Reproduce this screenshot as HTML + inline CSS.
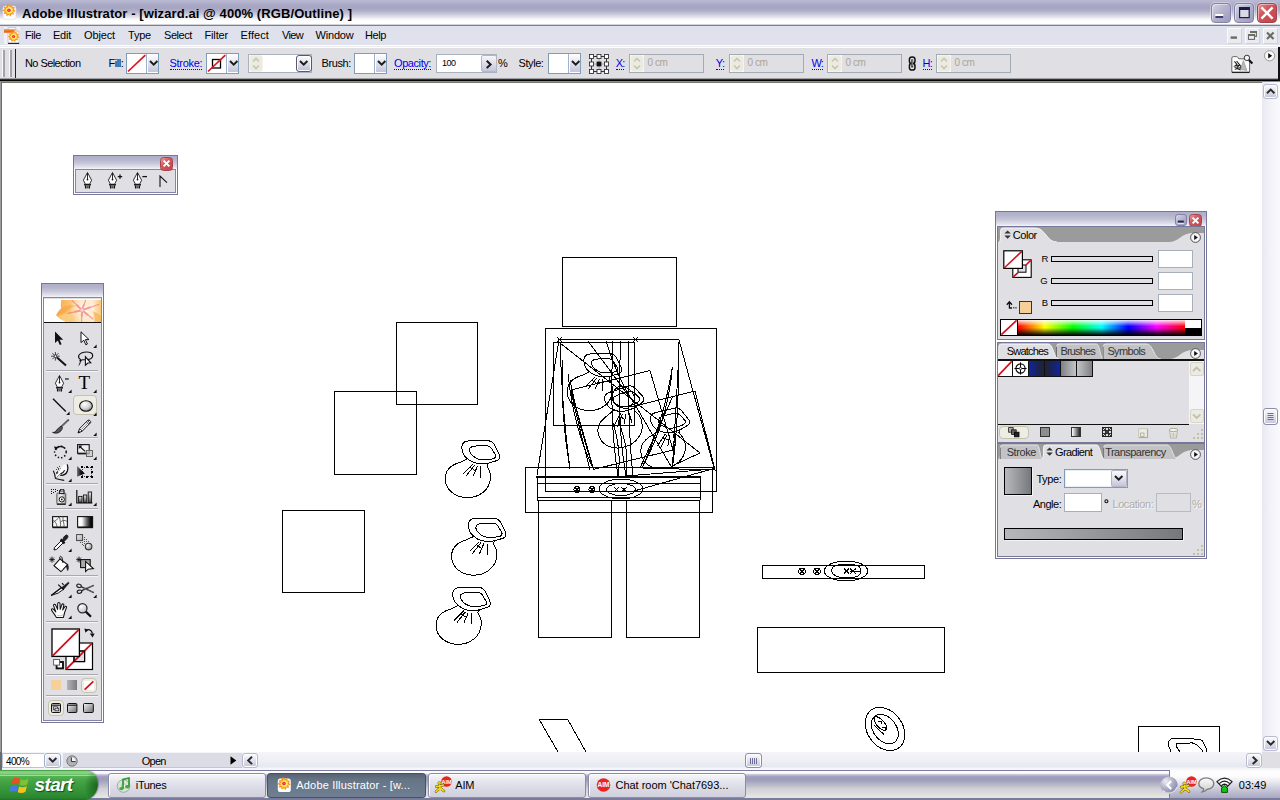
<!DOCTYPE html>
<html lang="en"><head><meta charset="utf-8"><title>Adobe Illustrator - [wizard.ai @ 400% (RGB/Outline) ]</title>
<style>
html,body{margin:0;padding:0;}
body{width:1280px;height:800px;overflow:hidden;position:relative;background:#fff;
 font-family:"Liberation Sans",sans-serif;font-size:11px;color:#000;}
.t{position:absolute;white-space:nowrap;line-height:14px;}
svg{overflow:visible;display:block;}
.abs{position:absolute;}
.du{border-bottom:1px dotted #0000ee;padding-bottom:0;line-height:12px;}
</style></head>
<body>
<div style="position:absolute;left:0px;top:0px;width:1280px;height:26px;background:linear-gradient(to bottom,#babad3 0,#b4b4cf 2px,#a9a9c6 5px,#a5a5c3 8px,#b0b0ca 11px,#c8c8da 14px,#e2e2ec 17px,#f6f6f9 19px,#ffffff 21px,#ffffff 23.6px,#d6d6dc 24.2px,#cfcfd8 24.9px,#7e7e9e 25px,#7e7e9e 26px);"></div>
<svg style="position:absolute;left:2px;top:4px;" width="16" height="16" viewBox="0 0 16 16"><rect x="1" y="2" width="13" height="13.4" rx="2.6" fill="#fbfbfd" stroke="#dcdce6" stroke-width="0.6"/><g transform="translate(0.2,0) scale(0.86)"><path d="M7.4 0.2 9.2 2.2 11.6 0.8 12 3.6 14.8 3.8 13.6 6.4 15.6 8.4 13 9.4 13.6 12.2 10.8 11.8 9.8 14.4 7.6 12.6 5.2 14.2 4.6 11.4 1.8 11.6 2.8 9 0.4 7.4 2.8 6 1.8 3.2 4.6 3.4 5.4 0.8z" fill="#f8931d"/>
<path d="M7.6 2 9 3.6 10.8 2.8 11 4.8 13 5.2 12 7 13.4 8.6 11.6 9.2 11.8 11 9.8 10.6 9 12.4 7.6 11 5.8 12 5.6 10 3.6 10 4.4 8.2 2.8 7 4.6 6.2 4 4.2 6 4.6z" fill="#fde24a"/>
<path d="M7.8 3.8 8.8 5 10 4.6 10 6 11.4 6.6 10.4 7.6 11 9 9.6 9 9 10.2 8 9.4 6.8 10 6.8 8.6 5.6 8.2 6.4 7.2 5.6 6 7 6z" fill="#fff7c8"/>
<circle cx="7.9" cy="7.2" r="2.1" fill="#f4262c"/><circle cx="7.9" cy="7.2" r="0.9" fill="#fa6a5a"/></g></svg>
<span class="t" style="left:22px;top:6px;font-size:13px;font-weight:bold;letter-spacing:0.087px;line-height:16px;">Adobe Illustrator - [wizard.ai @ 400% (RGB/Outline) ]</span>
<div style="position:absolute;left:1211px;top:3px;width:20px;height:20px;background:linear-gradient(135deg,#d4d4e4 0,#b4b4ce 45%,#9c9cbc 100%);border:1px solid #8282a8;border-radius:4px;box-sizing:border-box;box-shadow:inset 1px 1px 0 rgba(255,255,255,.45),0 0 0 1px rgba(255,255,255,.35);"></div>
<div style="position:absolute;left:1234px;top:3px;width:20px;height:20px;background:linear-gradient(135deg,#d4d4e4 0,#b4b4ce 45%,#9c9cbc 100%);border:1px solid #8282a8;border-radius:4px;box-sizing:border-box;box-shadow:inset 1px 1px 0 rgba(255,255,255,.45),0 0 0 1px rgba(255,255,255,.35);"></div>
<div style="position:absolute;left:1257px;top:3px;width:20px;height:20px;background:linear-gradient(135deg,#e4908f 0,#d2555b 40%,#c0434b 100%);border:1px solid #a6414b;border-radius:4px;box-sizing:border-box;box-shadow:inset 1px 1px 0 rgba(255,255,255,.45),0 0 0 1px rgba(255,255,255,.35);"></div>
<svg style="position:absolute;left:1211px;top:3px;" width="20" height="20" viewBox="0 0 20 20"><rect x="4.4" y="11.2" width="7.8" height="3.6" fill="#fff"/><rect x="4.4" y="13" width="7.8" height="2" fill="#3c3c66"/><rect x="4.4" y="11" width="7.8" height="1" fill="#fff"/></svg>
<svg style="position:absolute;left:1234px;top:3px;" width="20" height="20" viewBox="0 0 20 20"><rect x="5.6" y="4.6" width="9.6" height="10" fill="#d9d9e6" stroke="#1c1c48" stroke-width="1.2"/><rect x="5" y="4" width="10.8" height="3" fill="#1c1c48"/></svg>
<svg style="position:absolute;left:1257px;top:3px;" width="20" height="20" viewBox="0 0 20 20"><path d="M4.4 4.4 15.6 15.6M15.6 4.4 4.4 15.6" stroke="#fff" stroke-width="2.4" stroke-linecap="butt"/></svg>
<div style="position:absolute;left:0px;top:26px;width:1280px;height:19px;background:#dfe1ec;"></div>
<div style="position:absolute;left:0px;top:45px;width:1280px;height:3px;background:linear-gradient(to bottom,#fefefe 0,#fefefe 1px,#ececee 1px,#ececee 2px,#fdfdfd 2px);"></div>
<svg style="position:absolute;left:4px;top:27px;" width="17" height="17" viewBox="0 0 17 17"><rect x="0" y="0" width="16" height="17" fill="#f1f2f7"/><path d="M4 0.6H11.4L15 4.2V16.2H4z" fill="#fdfdf9" stroke="#b4b4b4" stroke-width="0.7"/><path d="M11.4 0.6V4.2H15" fill="#e8e8e8" stroke="#b4b4b4" stroke-width="0.6"/><path d="M4 16.4H15.2" stroke="#222" stroke-width="1.1"/><path d="M0 2.4H10.6V5.8H0z" fill="#ee6a12"/><path d="M0 2.4H10.6V3.4H0z" fill="#f89a4a"/><g transform="translate(3.6,4) scale(0.76)"><path d="M7.4 0.2 9.2 2.2 11.6 0.8 12 3.6 14.8 3.8 13.6 6.4 15.6 8.4 13 9.4 13.6 12.2 10.8 11.8 9.8 14.4 7.6 12.6 5.2 14.2 4.6 11.4 1.8 11.6 2.8 9 0.4 7.4 2.8 6 1.8 3.2 4.6 3.4 5.4 0.8z" fill="#f8931d"/>
<path d="M7.6 2 9 3.6 10.8 2.8 11 4.8 13 5.2 12 7 13.4 8.6 11.6 9.2 11.8 11 9.8 10.6 9 12.4 7.6 11 5.8 12 5.6 10 3.6 10 4.4 8.2 2.8 7 4.6 6.2 4 4.2 6 4.6z" fill="#fde24a"/>
<path d="M7.8 3.8 8.8 5 10 4.6 10 6 11.4 6.6 10.4 7.6 11 9 9.6 9 9 10.2 8 9.4 6.8 10 6.8 8.6 5.6 8.2 6.4 7.2 5.6 6 7 6z" fill="#fff7c8"/>
<circle cx="7.9" cy="7.2" r="2.1" fill="#f4262c"/><circle cx="7.9" cy="7.2" r="0.9" fill="#fa6a5a"/></g></svg>
<span class="t" style="left:25px;top:28px;font-size:11px;letter-spacing:-0.430px;">File</span>
<span class="t" style="left:53px;top:28px;font-size:11px;letter-spacing:-0.242px;">Edit</span>
<span class="t" style="left:84px;top:28px;font-size:11px;letter-spacing:-0.135px;">Object</span>
<span class="t" style="left:128px;top:28px;font-size:11px;letter-spacing:-0.215px;">Type</span>
<span class="t" style="left:164px;top:28px;font-size:11px;letter-spacing:-0.432px;">Select</span>
<span class="t" style="left:204.5px;top:28px;font-size:11px;letter-spacing:-0.156px;">Filter</span>
<span class="t" style="left:240.5px;top:28px;font-size:11px;letter-spacing:0.091px;">Effect</span>
<span class="t" style="left:282px;top:28px;font-size:11px;letter-spacing:-0.660px;">View</span>
<span class="t" style="left:315.5px;top:28px;font-size:11px;letter-spacing:-0.188px;">Window</span>
<span class="t" style="left:365px;top:28px;font-size:11px;letter-spacing:-0.406px;">Help</span>
<div style="position:absolute;left:1227px;top:28px;width:15px;height:16px;background:#e9ebf1;border:1px solid #fbfbfd;border-right-color:#cfd1dc;border-bottom-color:#cfd1dc;box-sizing:border-box;"></div>
<div style="position:absolute;left:1245px;top:28px;width:15px;height:16px;background:#e9ebf1;border:1px solid #fbfbfd;border-right-color:#cfd1dc;border-bottom-color:#cfd1dc;box-sizing:border-box;"></div>
<div style="position:absolute;left:1263px;top:28px;width:15px;height:16px;background:#e9ebf1;border:1px solid #fbfbfd;border-right-color:#cfd1dc;border-bottom-color:#cfd1dc;box-sizing:border-box;"></div>
<svg style="position:absolute;left:1227px;top:28px;" width="15" height="16" viewBox="0 0 15 16"><rect x="3.6" y="8.4" width="6.4" height="2.4" fill="#6c6c62"/></svg>
<svg style="position:absolute;left:1245px;top:28px;" width="15" height="16" viewBox="0 0 15 16"><path d="M5.6 3.6H11.4V8.4H9.6" fill="none" stroke="#6c6c62" stroke-width="1.1"/><path d="M5 3H12V5H5z" fill="#6c6c62"/><rect x="3.5" y="6.6" width="6" height="4.8" fill="#e9ebf1" stroke="#6c6c62" stroke-width="1.1"/><path d="M3 6H10V8H3z" fill="#6c6c62"/></svg>
<svg style="position:absolute;left:1263px;top:28px;" width="15" height="16" viewBox="0 0 15 16"><path d="M4 4.4 10.6 11M10.6 4.4 4 11" stroke="#6c6c62" stroke-width="2.1"/></svg>
<div style="position:absolute;left:0px;top:48px;width:1280px;height:32px;background:#e0dfe3;"></div>
<div style="position:absolute;left:0px;top:78px;width:1279px;height:3px;background:linear-gradient(to bottom,#d2d1d5 0,#6e6e70 1px,#5a5a5a 1.4px,#0a0a0a 1.6px,#000 3px);"></div>
<div style="position:absolute;left:1278px;top:47px;width:2px;height:34px;background:#111;"></div>
<div style="position:absolute;left:0px;top:81px;width:1280px;height:1px;background:#8e8e88;"></div>
<div style="position:absolute;left:0px;top:82px;width:1262px;height:1px;background:#77776c;"></div>
<div style="position:absolute;left:2px;top:50px;width:1px;height:27px;background:#fafafa;"></div>
<div style="position:absolute;left:3px;top:50px;width:2px;height:27px;background:#a2a2a8;"></div>
<div style="position:absolute;left:9px;top:50px;width:1px;height:27px;background:#fafafa;"></div>
<div style="position:absolute;left:10px;top:50px;width:2px;height:27px;background:#a2a2a8;"></div>
<div style="position:absolute;left:15px;top:49px;width:1px;height:29px;background:#222;"></div>
<span class="t" style="left:25px;top:56px;font-size:11px;letter-spacing:-0.576px;">No Selection</span>
<span class="t" style="left:108.5px;top:56px;font-size:11px;letter-spacing:-0.459px;">Fill:</span>
<div style="position:absolute;left:126px;top:53px;width:33px;height:21px;box-sizing:border-box;border:1px solid #7f9db9;background:#fff;"></div><div style="position:absolute;left:146px;top:54px;width:1px;height:19px;background:#9db2cc;"></div><div style="position:absolute;left:148px;top:55px;width:10px;height:17px;background:linear-gradient(to bottom,#fdfdfe 0,#e6e6f0 40%,#c4c4dc 100%);"></div><svg style="position:absolute;left:149.5px;top:61px;" width="8" height="5" viewBox="0 0 8 5"><path d="M0 0 3.7 3.6 7.4 0" fill="none" stroke="#1c1c1c" stroke-width="2" stroke-linejoin="miter"/></svg><svg style="position:absolute;left:126px;top:53px;" width="21" height="21" viewBox="0 0 21 21"><path d="M2 18.5 19.3 2.2" stroke="#d8141e" stroke-width="1.7"/></svg>
<span class="t du" style="left:169.6px;top:57px;font-size:11px;color:#0000ee;letter-spacing:-0.311px;">Stroke:</span>
<div style="position:absolute;left:206px;top:53px;width:33px;height:21px;box-sizing:border-box;border:1px solid #7f9db9;background:#fff;"></div><div style="position:absolute;left:226px;top:54px;width:1px;height:19px;background:#9db2cc;"></div><div style="position:absolute;left:228px;top:55px;width:10px;height:17px;background:linear-gradient(to bottom,#fdfdfe 0,#e6e6f0 40%,#c4c4dc 100%);"></div><svg style="position:absolute;left:229.5px;top:61px;" width="8" height="5" viewBox="0 0 8 5"><path d="M0 0 3.7 3.6 7.4 0" fill="none" stroke="#1c1c1c" stroke-width="2" stroke-linejoin="miter"/></svg><svg style="position:absolute;left:206px;top:53px;" width="21" height="21" viewBox="0 0 21 21"><rect x="6.5" y="6.5" width="8" height="8.5" fill="none" stroke="#000" stroke-width="1.3"/><path d="M2 18.5 19.3 2.2" stroke="#d8141e" stroke-width="1.7"/></svg>
<div style="position:absolute;left:248px;top:54px;width:64px;height:19px;box-sizing:border-box;border:1px solid #a9b1be;background:#fff;"></div>
<div style="position:absolute;left:250px;top:56px;width:12px;height:15px;background:#ecebe0;border-radius:2px;box-shadow:0 0 0 1px #f4f3ea;"></div><svg style="position:absolute;left:250px;top:56px;" width="12" height="15" viewBox="0 0 12 15"><path d="M3.0 5.5 6.0 2.5 9.0 5.5M3.0 9.5 6.0 12.5 9.0 9.5" fill="none" stroke="#c6c5b6" stroke-width="1.6"/></svg>
<div style="position:absolute;left:296px;top:55px;width:16px;height:17px;box-sizing:border-box;border:1px solid #55586e;border-radius:3px;background:linear-gradient(to bottom,#fdfdfe 0,#e6e6f0 40%,#bdbdd6 100%);box-shadow:inset 0 0 0 1px #fff;"></div>
<svg style="position:absolute;left:300.3px;top:61px;" width="8" height="5" viewBox="0 0 8 5"><path d="M0 0 3.7 3.6 7.4 0" fill="none" stroke="#1c1c1c" stroke-width="2" stroke-linejoin="miter"/></svg>
<span class="t" style="left:321.5px;top:56px;font-size:11px;letter-spacing:-0.385px;">Brush:</span>
<div style="position:absolute;left:354px;top:53px;width:33px;height:21px;box-sizing:border-box;border:1px solid #7f9db9;background:#fff;"></div><div style="position:absolute;left:374px;top:54px;width:1px;height:19px;background:#9db2cc;"></div><div style="position:absolute;left:376px;top:55px;width:10px;height:17px;background:linear-gradient(to bottom,#fdfdfe 0,#e6e6f0 40%,#c4c4dc 100%);"></div><svg style="position:absolute;left:377.5px;top:61px;" width="8" height="5" viewBox="0 0 8 5"><path d="M0 0 3.7 3.6 7.4 0" fill="none" stroke="#1c1c1c" stroke-width="2" stroke-linejoin="miter"/></svg>
<span class="t du" style="left:394px;top:57px;font-size:11px;color:#0000ee;letter-spacing:-0.422px;">Opacity:</span>
<div style="position:absolute;left:436px;top:54px;width:61px;height:19px;box-sizing:border-box;border:1px solid #a9b1be;background:#fff;"></div>
<span class="t" style="left:442px;top:56.5px;font-size:9px;letter-spacing:-0.500px;line-height:13px;">100</span>
<div style="position:absolute;left:481px;top:55px;width:16px;height:17px;box-sizing:border-box;border:1px solid #b4b6c8;border-radius:2px;background:linear-gradient(to bottom,#f6f6fa 0,#dedeea 50%,#c6c6dc 100%);"></div>
<svg style="position:absolute;left:485.5px;top:59.5px;" width="6" height="9" viewBox="0 0 6 9"><path d="M0.7 0.7 4.6 4.4 0.7 8.1" fill="none" stroke="#1c1c1c" stroke-width="2"/></svg>
<span class="t" style="left:498px;top:56px;font-size:11px;letter-spacing:-0.781px;">%</span>
<span class="t" style="left:518.5px;top:56px;font-size:11px;letter-spacing:-0.422px;">Style:</span>
<div style="position:absolute;left:548px;top:53px;width:33px;height:21px;box-sizing:border-box;border:1px solid #7f9db9;background:#fff;"></div><div style="position:absolute;left:568px;top:54px;width:1px;height:19px;background:#9db2cc;"></div><div style="position:absolute;left:570px;top:55px;width:10px;height:17px;background:linear-gradient(to bottom,#fdfdfe 0,#e6e6f0 40%,#c4c4dc 100%);"></div><svg style="position:absolute;left:571.5px;top:61px;" width="8" height="5" viewBox="0 0 8 5"><path d="M0 0 3.7 3.6 7.4 0" fill="none" stroke="#1c1c1c" stroke-width="2" stroke-linejoin="miter"/></svg>
<svg style="position:absolute;left:589px;top:53.5px;" width="20" height="20" viewBox="0 0 20 20"><rect x="2.5" y="2.5" width="15" height="15" fill="none" stroke="#333" stroke-width="1"/><path d="M2.5 10H17.5M10 2.5V17.5" stroke="#555" stroke-width="0.8" stroke-dasharray="1 1"/><rect x="0.5" y="0.5" width="4" height="4" fill="#fff" stroke="#333" stroke-width="0.9"/><rect x="8.0" y="0.5" width="4" height="4" fill="#fff" stroke="#333" stroke-width="0.9"/><rect x="15.5" y="0.5" width="4" height="4" fill="#fff" stroke="#333" stroke-width="0.9"/><rect x="0.5" y="8.0" width="4" height="4" fill="#fff" stroke="#333" stroke-width="0.9"/><rect x="7.6" y="7.6" width="4.8" height="4.8" fill="#111"/><rect x="15.5" y="8.0" width="4" height="4" fill="#fff" stroke="#333" stroke-width="0.9"/><rect x="0.5" y="15.5" width="4" height="4" fill="#fff" stroke="#333" stroke-width="0.9"/><rect x="8.0" y="15.5" width="4" height="4" fill="#fff" stroke="#333" stroke-width="0.9"/><rect x="15.5" y="15.5" width="4" height="4" fill="#fff" stroke="#333" stroke-width="0.9"/></svg>
<span class="t du" style="left:615.8px;top:57px;font-size:11px;color:#0000ee;letter-spacing:-0.953px;">X:</span><div style="position:absolute;left:629px;top:54px;width:75px;height:19px;box-sizing:border-box;border:1px solid #a4abb4;background:#e0dfe3;"></div><div style="position:absolute;left:630px;top:55px;width:14px;height:17px;background:#fff;"></div><div style="position:absolute;left:631px;top:56px;width:12px;height:15px;background:#ecebe0;border-radius:2px;box-shadow:0 0 0 1px #f4f3ea;"></div><svg style="position:absolute;left:631px;top:56px;" width="12" height="15" viewBox="0 0 12 15"><path d="M3.0 5.5 6.0 2.5 9.0 5.5M3.0 9.5 6.0 12.5 9.0 9.5" fill="none" stroke="#c6c5b6" stroke-width="1.6"/></svg><span class="t" style="left:647.5px;top:56px;font-size:10px;color:#a8a696;letter-spacing:-0.468px;">0 cm</span>
<span class="t du" style="left:715.8px;top:57px;font-size:11px;color:#0000ee;letter-spacing:-0.648px;">Y:</span><div style="position:absolute;left:729px;top:54px;width:75px;height:19px;box-sizing:border-box;border:1px solid #a4abb4;background:#e0dfe3;"></div><div style="position:absolute;left:730px;top:55px;width:14px;height:17px;background:#fff;"></div><div style="position:absolute;left:731px;top:56px;width:12px;height:15px;background:#ecebe0;border-radius:2px;box-shadow:0 0 0 1px #f4f3ea;"></div><svg style="position:absolute;left:731px;top:56px;" width="12" height="15" viewBox="0 0 12 15"><path d="M3.0 5.5 6.0 2.5 9.0 5.5M3.0 9.5 6.0 12.5 9.0 9.5" fill="none" stroke="#c6c5b6" stroke-width="1.6"/></svg><span class="t" style="left:747.5px;top:56px;font-size:10px;color:#a8a696;letter-spacing:-0.468px;">0 cm</span>
<span class="t du" style="left:811.5px;top:57px;font-size:11px;color:#0000ee;letter-spacing:-0.867px;">W:</span><div style="position:absolute;left:827px;top:54px;width:75px;height:19px;box-sizing:border-box;border:1px solid #a4abb4;background:#e0dfe3;"></div><div style="position:absolute;left:828px;top:55px;width:14px;height:17px;background:#fff;"></div><div style="position:absolute;left:829px;top:56px;width:12px;height:15px;background:#ecebe0;border-radius:2px;box-shadow:0 0 0 1px #f4f3ea;"></div><svg style="position:absolute;left:829px;top:56px;" width="12" height="15" viewBox="0 0 12 15"><path d="M3.0 5.5 6.0 2.5 9.0 5.5M3.0 9.5 6.0 12.5 9.0 9.5" fill="none" stroke="#c6c5b6" stroke-width="1.6"/></svg><span class="t" style="left:845.5px;top:56px;font-size:10px;color:#a8a696;letter-spacing:-0.468px;">0 cm</span>
<span class="t du" style="left:922.5px;top:57px;font-size:11px;color:#0000ee;letter-spacing:-0.750px;">H:</span><div style="position:absolute;left:936px;top:54px;width:75px;height:19px;box-sizing:border-box;border:1px solid #a4abb4;background:#e0dfe3;"></div><div style="position:absolute;left:937px;top:55px;width:14px;height:17px;background:#fff;"></div><div style="position:absolute;left:938px;top:56px;width:12px;height:15px;background:#ecebe0;border-radius:2px;box-shadow:0 0 0 1px #f4f3ea;"></div><svg style="position:absolute;left:938px;top:56px;" width="12" height="15" viewBox="0 0 12 15"><path d="M3.0 5.5 6.0 2.5 9.0 5.5M3.0 9.5 6.0 12.5 9.0 9.5" fill="none" stroke="#c6c5b6" stroke-width="1.6"/></svg><span class="t" style="left:954.5px;top:56px;font-size:10px;color:#a8a696;letter-spacing:-0.468px;">0 cm</span>
<svg style="position:absolute;left:908px;top:56px;" width="9" height="15" viewBox="0 0 9 15"><rect x="1.4" y="0.9" width="5.6" height="6.8" rx="2.6" fill="#e8e8e8" stroke="#111" stroke-width="1.5"/><rect x="1.4" y="7.3" width="5.6" height="6.8" rx="2.6" fill="#e8e8e8" stroke="#111" stroke-width="1.5"/><path d="M4.2 3.4V11.4" stroke="#111" stroke-width="2"/><path d="M4.2 4V10.4" stroke="#eee" stroke-width="0.7"/></svg>
<svg style="position:absolute;left:1231px;top:54px;" width="23" height="20" viewBox="0 0 23 20">
<path d="M0.8 4.4Q0.8 2.6 2.4 2.6H5.4Q6.6 2.6 7.2 3.8L7.8 4.8H17.4Q18.6 4.8 18.6 6V17.2Q18.6 18.4 17.4 18.4H2Q0.8 18.4 0.8 17.2z" fill="#fdfdfd" stroke="#555" stroke-width="0.9"/>
<path d="M0.8 18.4H18.6" stroke="#222" stroke-width="1.3"/>
<path d="M3.4 7.4 6 10.4 4 12 8 11.4 5 15 10 13.4 9 16M5.6 7l5 6.4M3.6 13.6l6 2.4" stroke="#222" stroke-width="1.1" fill="none"/>
<path d="M12.4 6.4 9.4 15.6 15.8 16.4z" fill="#bbb" stroke="#888" stroke-width="0.6"/>
<circle cx="15.9" cy="3.9" r="2.7" fill="#f4f4f4" stroke="#333" stroke-width="1"/>
<path d="M17.9 5.9 21.4 9.4" stroke="#111" stroke-width="2.1"/></svg>
<svg style="position:absolute;left:1264px;top:49.5px;" width="12" height="12" viewBox="0 0 12 12"><circle cx="5.6" cy="5.8" r="5.1" fill="#fafafa" stroke="#8c8c8c" stroke-width="0.9"/><path d="M4.2 3 8.2 5.8 4.2 8.6z" fill="#111"/></svg>
<svg style="position:absolute;left:0;top:0;overflow:hidden" width="1262" height="752" viewBox="0 0 1262 752" fill="none" stroke="#000" stroke-width="1" shape-rendering="crispEdges"><rect x="396.5" y="322.5" width="81" height="82"/>
<rect x="334.5" y="391.5" width="82" height="83"/>
<rect x="282.5" y="510.5" width="82" height="82"/>
<rect x="562.5" y="257.5" width="114" height="69"/>
<rect x="545.5" y="328.5" width="171" height="163"/>
<rect x="553.5" y="342.5" width="81" height="83"/>
<rect x="525.5" y="467.5" width="187" height="45"/>
<rect x="538.5" y="500.5" width="73" height="137"/>
<rect x="626.5" y="500.5" width="73" height="137"/>
<path d="M536 476.5H701M536 477.5H701M537 483.5H700M537 497.5H700M537 500.5H700M537.5 476V500M700.5 476V500"/>
<ellipse cx="621" cy="489" rx="22" ry="9.8"/>
<ellipse cx="621" cy="489.5" rx="14.5" ry="6"/>
<ellipse cx="577" cy="489.5" rx="3" ry="3"/>
<ellipse cx="592" cy="489.5" rx="3" ry="3"/>
<path d="M575 487.5l4 4m0-4l-4 4M590 487.5l4 4m0-4l-4 4M614 487l5 5m0-5l-5 5M621 487l6 5m0-5l-6 5"/>
<path d="M558 339.5H679M559 340L537 475M679 340L714 468M557 337l5 5m0-5l-5 5M633 337l5 5m0-5l-5 5"/>
<path d="M714 468.5L634 491M714 469L600 478"/>
<path d="M571 390L650 370.6L673 450L593.6 469.4Z"/>
<path d="M631 407L695 391L715 470L606 467"/>
<path d="M560 343Q562 410 570 469Q560 410 563 360"/>
<path d="M568 374Q574 430 594 470Q580 430 570 380"/>
<path d="M672.4 367Q664 420 642 468Q668 420 672.4 367"/>
<path d="M678 341Q680 410 672.4 468Q676 410 679 352"/>
<path d="M560 343L700 453M588 341L634 403M590 470Q580 430 571 392M613 341Q609 420 618 476M621 341Q616 420 626 476M629 341Q627 420 633 476M634 403L672 468M640 468L673 396M700 453L672 466"/>
<path d="M612 420Q622 450 618 476M618 420Q630 450 626 476M606 341Q618 380 634 403"/>
<g transform="translate(589.5,392) rotate(0) scale(1.0)"><path d="M0 -20.2L-7.2 -16.8C-17 -14 -22.6 -8 -22.2 0.5C-21.8 11 -12 18.6 0 18.6C12 18.6 22.6 10.5 23 -1.5C23.2 -6 21.6 -10 19.3 -13"/><path d="M0 -20.2C-2.4 -22 -4 -24 -4.6 -26.6C-5.6 -29 -6.2 -31 -5.4 -33.6C-4.6 -36.4 -2 -38.1 1.4 -38.1L21.5 -38.1C24 -38 25.6 -36.4 26.7 -34.6L31.6 -24.5C32.6 -22 32.2 -20 30.2 -18.8C27 -17.4 24 -17 21.5 -15.9C20.4 -15 19.8 -14 19.3 -13"/><path d="M2 -28.9C2 -30.6 2.8 -31.6 4.3 -32.3C8 -33.4 15 -33.4 20.1 -33.2C22 -33 23.4 -31.8 24.4 -30.3L28.2 -23.7C28.6 -22 27.6 -20.8 25.9 -20.2C22 -19.2 18 -19 14.4 -19.1C11.6 -19.4 9 -20.4 7.2 -21.7C4.6 -23.6 2.4 -26 2 -28.9Z"/><path d="M0 -20.2C3 -17.6 6 -16.2 9 -15.7C13 -15 17 -15 21.5 -15.9"/><path d="M5.7 -15L-4.3 -5.3M7.2 -13.9L-1.5 -3M10 -13L5.7 -3M13.4 -13L13.4 -1.5M2.9 -11.6L7.2 -8.7"/></g>
<g transform="translate(620,429) rotate(-18) scale(1.0)"><path d="M0 -20.2L-7.2 -16.8C-17 -14 -22.6 -8 -22.2 0.5C-21.8 11 -12 18.6 0 18.6C12 18.6 22.6 10.5 23 -1.5C23.2 -6 21.6 -10 19.3 -13"/><path d="M0 -20.2C-2.4 -22 -4 -24 -4.6 -26.6C-5.6 -29 -6.2 -31 -5.4 -33.6C-4.6 -36.4 -2 -38.1 1.4 -38.1L21.5 -38.1C24 -38 25.6 -36.4 26.7 -34.6L31.6 -24.5C32.6 -22 32.2 -20 30.2 -18.8C27 -17.4 24 -17 21.5 -15.9C20.4 -15 19.8 -14 19.3 -13"/><path d="M2 -28.9C2 -30.6 2.8 -31.6 4.3 -32.3C8 -33.4 15 -33.4 20.1 -33.2C22 -33 23.4 -31.8 24.4 -30.3L28.2 -23.7C28.6 -22 27.6 -20.8 25.9 -20.2C22 -19.2 18 -19 14.4 -19.1C11.6 -19.4 9 -20.4 7.2 -21.7C4.6 -23.6 2.4 -26 2 -28.9Z"/><path d="M0 -20.2C3 -17.6 6 -16.2 9 -15.7C13 -15 17 -15 21.5 -15.9"/><path d="M5.7 -15L-4.3 -5.3M7.2 -13.9L-1.5 -3M10 -13L5.7 -3M13.4 -13L13.4 -1.5M2.9 -11.6L7.2 -8.7"/></g>
<g transform="translate(663,450) rotate(-13) scale(1.0)"><path d="M0 -20.2L-7.2 -16.8C-17 -14 -22.6 -8 -22.2 0.5C-21.8 11 -12 18.6 0 18.6C12 18.6 22.6 10.5 23 -1.5C23.2 -6 21.6 -10 19.3 -13"/><path d="M0 -20.2C-2.4 -22 -4 -24 -4.6 -26.6C-5.6 -29 -6.2 -31 -5.4 -33.6C-4.6 -36.4 -2 -38.1 1.4 -38.1L21.5 -38.1C24 -38 25.6 -36.4 26.7 -34.6L31.6 -24.5C32.6 -22 32.2 -20 30.2 -18.8C27 -17.4 24 -17 21.5 -15.9C20.4 -15 19.8 -14 19.3 -13"/><path d="M2 -28.9C2 -30.6 2.8 -31.6 4.3 -32.3C8 -33.4 15 -33.4 20.1 -33.2C22 -33 23.4 -31.8 24.4 -30.3L28.2 -23.7C28.6 -22 27.6 -20.8 25.9 -20.2C22 -19.2 18 -19 14.4 -19.1C11.6 -19.4 9 -20.4 7.2 -21.7C4.6 -23.6 2.4 -26 2 -28.9Z"/><path d="M0 -20.2C3 -17.6 6 -16.2 9 -15.7C13 -15 17 -15 21.5 -15.9"/><path d="M5.7 -15L-4.3 -5.3M7.2 -13.9L-1.5 -3M10 -13L5.7 -3M13.4 -13L13.4 -1.5M2.9 -11.6L7.2 -8.7"/></g>
<path d="M612 395Q618 380 630 390Q640 400 628 408Q614 410 612 395"/>
<g transform="translate(467.5,479) rotate(0) scale(1.0)"><path d="M0 -20.2L-7.2 -16.8C-17 -14 -22.6 -8 -22.2 0.5C-21.8 11 -12 18.6 0 18.6C12 18.6 22.6 10.5 23 -1.5C23.2 -6 21.6 -10 19.3 -13"/><path d="M0 -20.2C-2.4 -22 -4 -24 -4.6 -26.6C-5.6 -29 -6.2 -31 -5.4 -33.6C-4.6 -36.4 -2 -38.1 1.4 -38.1L21.5 -38.1C24 -38 25.6 -36.4 26.7 -34.6L31.6 -24.5C32.6 -22 32.2 -20 30.2 -18.8C27 -17.4 24 -17 21.5 -15.9C20.4 -15 19.8 -14 19.3 -13"/><path d="M2 -28.9C2 -30.6 2.8 -31.6 4.3 -32.3C8 -33.4 15 -33.4 20.1 -33.2C22 -33 23.4 -31.8 24.4 -30.3L28.2 -23.7C28.6 -22 27.6 -20.8 25.9 -20.2C22 -19.2 18 -19 14.4 -19.1C11.6 -19.4 9 -20.4 7.2 -21.7C4.6 -23.6 2.4 -26 2 -28.9Z"/><path d="M0 -20.2C3 -17.6 6 -16.2 9 -15.7C13 -15 17 -15 21.5 -15.9"/><path d="M5.7 -15L-4.3 -5.3M7.2 -13.9L-1.5 -3M10 -13L5.7 -3M13.4 -13L13.4 -1.5M2.9 -11.6L7.2 -8.7"/></g>
<g transform="translate(473.8,556.6) rotate(0) scale(1.0)"><path d="M0 -20.2L-7.2 -16.8C-17 -14 -22.6 -8 -22.2 0.5C-21.8 11 -12 18.6 0 18.6C12 18.6 22.6 10.5 23 -1.5C23.2 -6 21.6 -10 19.3 -13"/><path d="M0 -20.2C-2.4 -22 -4 -24 -4.6 -26.6C-5.6 -29 -6.2 -31 -5.4 -33.6C-4.6 -36.4 -2 -38.1 1.4 -38.1L21.5 -38.1C24 -38 25.6 -36.4 26.7 -34.6L31.6 -24.5C32.6 -22 32.2 -20 30.2 -18.8C27 -17.4 24 -17 21.5 -15.9C20.4 -15 19.8 -14 19.3 -13"/><path d="M2 -28.9C2 -30.6 2.8 -31.6 4.3 -32.3C8 -33.4 15 -33.4 20.1 -33.2C22 -33 23.4 -31.8 24.4 -30.3L28.2 -23.7C28.6 -22 27.6 -20.8 25.9 -20.2C22 -19.2 18 -19 14.4 -19.1C11.6 -19.4 9 -20.4 7.2 -21.7C4.6 -23.6 2.4 -26 2 -28.9Z"/><path d="M0 -20.2C3 -17.6 6 -16.2 9 -15.7C13 -15 17 -15 21.5 -15.9"/><path d="M5.7 -15L-4.3 -5.3M7.2 -13.9L-1.5 -3M10 -13L5.7 -3M13.4 -13L13.4 -1.5M2.9 -11.6L7.2 -8.7"/></g>
<g transform="translate(458.3,625.7) rotate(0) scale(1.0)"><path d="M0 -20.2L-7.2 -16.8C-17 -14 -22.6 -8 -22.2 0.5C-21.8 11 -12 18.6 0 18.6C12 18.6 22.6 10.5 23 -1.5C23.2 -6 21.6 -10 19.3 -13"/><path d="M0 -20.2C-2.4 -22 -4 -24 -4.6 -26.6C-5.6 -29 -6.2 -31 -5.4 -33.6C-4.6 -36.4 -2 -38.1 1.4 -38.1L21.5 -38.1C24 -38 25.6 -36.4 26.7 -34.6L31.6 -24.5C32.6 -22 32.2 -20 30.2 -18.8C27 -17.4 24 -17 21.5 -15.9C20.4 -15 19.8 -14 19.3 -13"/><path d="M2 -28.9C2 -30.6 2.8 -31.6 4.3 -32.3C8 -33.4 15 -33.4 20.1 -33.2C22 -33 23.4 -31.8 24.4 -30.3L28.2 -23.7C28.6 -22 27.6 -20.8 25.9 -20.2C22 -19.2 18 -19 14.4 -19.1C11.6 -19.4 9 -20.4 7.2 -21.7C4.6 -23.6 2.4 -26 2 -28.9Z"/><path d="M0 -20.2C3 -17.6 6 -16.2 9 -15.7C13 -15 17 -15 21.5 -15.9"/><path d="M5.7 -15L-4.3 -5.3M7.2 -13.9L-1.5 -3M10 -13L5.7 -3M13.4 -13L13.4 -1.5M2.9 -11.6L7.2 -8.7"/></g>
<rect x="762.5" y="565.5" width="162" height="13"/>
<ellipse cx="846" cy="571" rx="21.8" ry="9.9"/>
<path d="M833 567Q836 564.6 842 564.6H852Q861 565 861 571Q861 577 852 577.4H842Q834 577 832 572Q831.4 569 833 567Z"/>
<ellipse cx="802" cy="571.4" rx="3.3" ry="3.3"/>
<ellipse cx="817" cy="571.4" rx="3.3" ry="3.3"/>
<path d="M800 569.4l4 4m0-4l-4 4M815 569.4l4 4m0-4l-4 4M844 568.6l5 5m0-5l-5 5M850 568.6l6 5m0-5l-6 5M850 571H860"/>
<rect x="757.5" y="627.5" width="187" height="45"/>
<path d="M539 719.5H567.5M539 719L558 752M567.5 719L586 752"/>
<ellipse cx="885" cy="729" rx="17.6" ry="23.4" transform="rotate(-36 885 729)"/>
<ellipse cx="884.8" cy="729" rx="11.4" ry="16.4" transform="rotate(-38 884.8 729)"/>
<ellipse cx="880.4" cy="723.6" rx="3.8" ry="8.6" transform="rotate(-42 880.4 723.6)"/>
<path d="M873.6 724.6L884 734.6M878 721h3v3M882 727.6h3v3"/>
<rect x="1138.5" y="726.5" width="81" height="34"/>
<path d="M1171.4 753L1168.3 744.9Q1167.6 741.6 1169.4 740.4Q1171 738.6 1173 738.5H1193.7L1194.5 739.5H1200.7L1202.7 741.2L1206.6 749.6V753M1180.8 753L1176.9 747.2Q1175.8 745 1176.2 743.4H1189.8L1190.9 742.4L1196.4 744.5L1202.7 750.4V753"/></svg>
<div style="position:absolute;left:0px;top:82px;width:1px;height:670px;background:#9c9ca0;"></div>
<div style="position:absolute;left:1px;top:82px;width:1px;height:670px;background:#6e6e62;"></div>
<div style="position:absolute;left:1262px;top:82px;width:18px;height:670px;background:linear-gradient(to right,#e9e8f2 0,#f3f3f9 50%,#fafafd 100%);"></div>
<div style="position:absolute;left:1263px;top:84px;width:15px;height:15px;box-sizing:border-box;border:1px solid #b9b9cf;border-radius:3px;background:linear-gradient(to bottom,#fbfbfd 0,#e4e4ef 45%,#c3c3da 100%);box-shadow:inset 0 0 0 1px #fdfdfe;"></div>
<svg style="position:absolute;left:1266.8px;top:88.5px;" width="8" height="5" viewBox="0 0 8 5"><path d="M0 4.2 3.7 0.6 7.4 4.2" fill="none" stroke="#2a2a2a" stroke-width="2"/></svg>
<div style="position:absolute;left:1263px;top:736px;width:15px;height:15px;box-sizing:border-box;border:1px solid #b9b9cf;border-radius:3px;background:linear-gradient(to bottom,#fbfbfd 0,#e4e4ef 45%,#c3c3da 100%);box-shadow:inset 0 0 0 1px #fdfdfe;"></div>
<svg style="position:absolute;left:1266.8px;top:741px;" width="8" height="5" viewBox="0 0 8 5"><path d="M0 0 3.7 3.6 7.4 0" fill="none" stroke="#2a2a2a" stroke-width="2"/></svg>
<div style="position:absolute;left:1263px;top:408px;width:15px;height:17px;box-sizing:border-box;border:1px solid #8c8cac;border-radius:3px;background:linear-gradient(to bottom,#fbfbfd 0,#e4e4ef 45%,#c3c3da 100%);box-shadow:inset 0 0 0 1px #fdfdfe;"></div>
<svg style="position:absolute;left:1263px;top:408px;" width="15" height="17" viewBox="0 0 15 17"><path d="M4.5 5.5H10.5M4.5 7.5H10.5M4.5 9.5H10.5M4.5 11.5H10.5" stroke="#6e6e96" stroke-width="1"/></svg>
<div style="position:absolute;left:0px;top:752px;width:1280px;height:18px;background:linear-gradient(to bottom,#f4f4f9 0,#efeff5 8px,#e7e7f0 15px,#f6f6fa 16px,#f6f6fa 18px);"></div>
<div style="position:absolute;left:1262px;top:752px;width:18px;height:16px;background:#e0dfe3;"></div>
<div style="position:absolute;left:0px;top:752px;width:2px;height:18px;background:#6a6a6a;"></div>
<div style="position:absolute;left:2px;top:753px;width:42px;height:15px;background:#fff;border:1px solid #b5c4d8;border-right:none;box-sizing:border-box;"></div>
<span class="t" style="left:6px;top:754.5px;font-size:10px;letter-spacing:-0.645px;">400%</span>
<div style="position:absolute;left:44px;top:753px;width:17px;height:15px;box-sizing:border-box;border:1px solid #b9b9cf;border-radius:3px;background:linear-gradient(to bottom,#fbfbfd 0,#e4e4ef 45%,#c3c3da 100%);box-shadow:inset 0 0 0 1px #fdfdfe;border-color:#9db0c9;"></div>
<svg style="position:absolute;left:48.8px;top:758px;" width="8" height="5" viewBox="0 0 8 5"><path d="M0 0 3.7 3.6 7.4 0" fill="none" stroke="#2a2a2a" stroke-width="2"/></svg>
<div style="position:absolute;left:63px;top:753px;width:179px;height:15px;background:#dcdce6;border-bottom:1px solid #c4c4d2;box-sizing:border-box;"></div>
<svg style="position:absolute;left:66px;top:754.5px;" width="12" height="12" viewBox="0 0 12 12"><circle cx="6" cy="6" r="5.2" fill="#b4b4b8" stroke="#77777c" stroke-width="1"/><path d="M5.4 6.6V2.2A4.2 4.2 0 0 1 9.8 6.6z" fill="#f6f6f6"/><path d="M5.4 2.4V6.6H9.6" stroke="#333" fill="none" stroke-width="1"/></svg>
<span class="t" style="left:141.7px;top:754px;font-size:11px;letter-spacing:-0.734px;">Open</span>
<svg style="position:absolute;left:230px;top:756px;" width="7" height="9" viewBox="0 0 7 9"><path d="M0.5 0.3 6.3 4.5 0.5 8.7z" fill="#000"/></svg>
<div style="position:absolute;left:242px;top:753px;width:16px;height:15px;box-sizing:border-box;border:1px solid #b9b9cf;border-radius:3px;background:linear-gradient(to bottom,#fbfbfd 0,#e4e4ef 45%,#c3c3da 100%);box-shadow:inset 0 0 0 1px #fdfdfe;"></div>
<svg style="position:absolute;left:247px;top:756px;" width="6" height="9" viewBox="0 0 6 9"><path d="M5 0.7 1.2 4.4 5 8.1" fill="none" stroke="#2a2a2a" stroke-width="2"/></svg>
<div style="position:absolute;left:1246px;top:753px;width:16px;height:15px;box-sizing:border-box;border:1px solid #b9b9cf;border-radius:3px;background:linear-gradient(to bottom,#fbfbfd 0,#e4e4ef 45%,#c3c3da 100%);box-shadow:inset 0 0 0 1px #fdfdfe;"></div>
<svg style="position:absolute;left:1251.5px;top:756px;" width="6" height="9" viewBox="0 0 6 9"><path d="M0.7 0.7 4.6 4.4 0.7 8.1" fill="none" stroke="#2a2a2a" stroke-width="2"/></svg>
<div style="position:absolute;left:745px;top:753px;width:17px;height:15px;box-sizing:border-box;border:1px solid #8c8cac;border-radius:3px;background:linear-gradient(to bottom,#fbfbfd 0,#e4e4ef 45%,#c3c3da 100%);box-shadow:inset 0 0 0 1px #fdfdfe;"></div>
<svg style="position:absolute;left:745px;top:753px;" width="17" height="15" viewBox="0 0 17 15"><path d="M5.5 5V11M7.5 5V11M9.5 5V11M11.5 5V11" stroke="#6e6e96" stroke-width="1"/></svg>
<div style="position:absolute;left:0px;top:770px;width:1280px;height:30px;background:linear-gradient(to bottom,#7c7ca0 0,#7c7ca0 1.2px,#fcfcfe 1.4px,#fcfcfe 3.2px,#c6c6d9 4.6px,#a3a3bf 6.5px,#9c9cb8 9px,#a8a8c2 12px,#bfbfce 16px,#d1d1d6 19px,#dbdbdc 23px,#e3e7e1 27px,#e3e7e1 27.6px,#7a7a9c 28px,#7a7a9c 30px);"></div>
<div style="position:absolute;left:1169px;top:770px;width:111px;height:30px;background:linear-gradient(to bottom,#fdfdfd 0,#fdfdfd 6px,#e8e8f0 12px,#cacadb 19px,#b6b6cc 24px,#a9a9c1 27.6px,#7a7a9c 28px,#7a7a9c 30px);border-left:1px solid #7c7ca0;box-sizing:border-box;"></div>
<div style="position:absolute;left:0px;top:770px;width:98px;height:30px;border-radius:0 13px 14px 0/0 14px 16px 0;background:radial-gradient(ellipse 13px 17px at 99% 55%,rgba(16,84,20,.75) 0,rgba(16,84,20,.35) 55%,rgba(16,84,20,0) 100%),linear-gradient(to bottom,#1f7d1f 0,#79cd74 1px,#8fd58b 3px,#6fc26b 4.5px,#9ddb99 5.5px,#55b253 6.5px,#48a648 10px,#3d9d3f 15px,#369539 20px,#2f8c33 25px,#2a8430 28px,#226f27 30px);box-shadow:1px 0 1px rgba(70,70,100,.45);"></div>
<span class="t" style="left:34.6px;top:775px;font-size:19px;font-weight:bold;color:#fff;letter-spacing:-0.674px;font-style:italic;line-height:20px;text-shadow:1px 1px 1px rgba(20,60,20,.85);">start</span>
<svg style="position:absolute;left:10px;top:775.6px;" width="20" height="18" viewBox="0 0 20 18">
<path d="M2.6 3.2Q6 0.6 9.6 2.6L8.2 8.6Q4.6 6.6 1.2 8.8z" fill="#e9501f"/>
<path d="M10.8 3Q14.4 5 18.6 2.6L17.2 8.6Q13.2 10.8 9.4 9z" fill="#7dc331"/>
<path d="M0.9 10.2Q4.4 8 7.9 9.9L6.5 15.8Q3 13.9-0.5 16.2z" fill="#467ce2"/>
<path d="M9.1 10.4Q12.8 12.2 16.9 9.9L15.5 15.8Q11.6 18 7.7 16.3z" fill="#f5c21c"/></svg>
<div style="position:absolute;left:108px;top:773px;width:158px;height:25px;box-sizing:border-box;border:1px solid #8c8caa;border-radius:3px;background:linear-gradient(to bottom,#f8f8fb 0,#e6e6ef 30%,#d8d8e4 70%,#d0d0dd 100%);box-shadow:inset 1px 1px 0 #fdfdfe;"></div>
<div style="position:absolute;left:267px;top:773px;width:159px;height:25px;box-sizing:border-box;border:1px solid #47525f;border-radius:3px;background:linear-gradient(to bottom,#566372 0,#667586 25%,#6f7f92 100%);"></div>
<div style="position:absolute;left:428px;top:773px;width:158px;height:25px;box-sizing:border-box;border:1px solid #8c8caa;border-radius:3px;background:linear-gradient(to bottom,#f8f8fb 0,#e6e6ef 30%,#d8d8e4 70%,#d0d0dd 100%);box-shadow:inset 1px 1px 0 #fdfdfe;"></div>
<div style="position:absolute;left:588px;top:773px;width:158px;height:25px;box-sizing:border-box;border:1px solid #8c8caa;border-radius:3px;background:linear-gradient(to bottom,#f8f8fb 0,#e6e6ef 30%,#d8d8e4 70%,#d0d0dd 100%);box-shadow:inset 1px 1px 0 #fdfdfe;"></div>
<span class="t" style="left:135.8px;top:778px;font-size:11px;letter-spacing:-0.354px;">iTunes</span>
<span class="t" style="left:296.3px;top:778px;font-size:11px;color:#fff;letter-spacing:0.179px;">Adobe Illustrator - [w...</span>
<span class="t" style="left:455.3px;top:778px;font-size:11px;letter-spacing:-0.188px;">AIM</span>
<span class="t" style="left:615.5px;top:778px;font-size:11px;letter-spacing:-0.021px;">Chat room 'Chat7693...</span>
<svg style="position:absolute;left:116px;top:777px;" width="16" height="16" viewBox="0 0 16 16"><circle cx="7.5" cy="9" r="6.3" fill="#d8e4d8" stroke="#8aa08a" stroke-width="0.8"/><circle cx="7.5" cy="9" r="2.2" fill="#f4f8f4" stroke="#9ab09a" stroke-width="0.6"/><path d="M7 11.5V2.5L13 1V9.5" fill="none" stroke="#2f9a2f" stroke-width="1.7"/><ellipse cx="5.4" cy="11.6" rx="2.2" ry="1.7" fill="#3cae3c"/><ellipse cx="11.4" cy="9.8" rx="2.2" ry="1.7" fill="#3cae3c"/></svg>
<svg style="position:absolute;left:277px;top:777px;" width="15" height="16" viewBox="0 0 15 16"><rect x="0.8" y="1.4" width="13" height="13.6" rx="2.6" fill="#fbfbfd"/><g transform="translate(0.2,0.4) scale(0.86)"><path d="M7.4 0.2 9.2 2.2 11.6 0.8 12 3.6 14.8 3.8 13.6 6.4 15.6 8.4 13 9.4 13.6 12.2 10.8 11.8 9.8 14.4 7.6 12.6 5.2 14.2 4.6 11.4 1.8 11.6 2.8 9 0.4 7.4 2.8 6 1.8 3.2 4.6 3.4 5.4 0.8z" fill="#f8931d"/>
<path d="M7.6 2 9 3.6 10.8 2.8 11 4.8 13 5.2 12 7 13.4 8.6 11.6 9.2 11.8 11 9.8 10.6 9 12.4 7.6 11 5.8 12 5.6 10 3.6 10 4.4 8.2 2.8 7 4.6 6.2 4 4.2 6 4.6z" fill="#fde24a"/>
<path d="M7.8 3.8 8.8 5 10 4.6 10 6 11.4 6.6 10.4 7.6 11 9 9.6 9 9 10.2 8 9.4 6.8 10 6.8 8.6 5.6 8.2 6.4 7.2 5.6 6 7 6z" fill="#fff7c8"/>
<circle cx="7.9" cy="7.2" r="2.1" fill="#f4262c"/><circle cx="7.9" cy="7.2" r="0.9" fill="#fa6a5a"/></g></svg>
<svg style="position:absolute;left:435px;top:776px;" width="18" height="17" viewBox="0 0 18 17"><circle cx="11.5" cy="5.5" r="5.3" fill="#e8261c"/><text x="11.5" y="7.5" font-size="5.5" font-weight="bold" fill="#fff" text-anchor="middle" font-family="Liberation Sans,sans-serif">AIM</text><g transform="translate(0,1)"><circle cx="4.4" cy="6.2" r="1.7" fill="#f4d81c" stroke="#6a5a00" stroke-width="0.5"/><path d="M4.6 8 5 11M5 11 1 14.6M5 11 9 14M1.2 9.6 4.8 9 8.4 8" stroke="#6a5a00" stroke-width="2.6" fill="none" stroke-linecap="round"/><path d="M4.6 8 5 11M5 11 1 14.6M5 11 9 14M1.2 9.6 4.8 9 8.4 8" stroke="#f4d81c" stroke-width="1.6" fill="none" stroke-linecap="round"/></g></svg>
<svg style="position:absolute;left:596px;top:778px;" width="16" height="14" viewBox="0 0 16 14"><circle cx="7.5" cy="7" r="6.8" fill="#e8261c"/><text x="7.5" y="9" font-size="6.5" font-weight="bold" fill="#fff" text-anchor="middle" font-family="Liberation Sans,sans-serif">AIM</text></svg>
<svg style="position:absolute;left:1160px;top:776px;" width="18" height="18" viewBox="0 0 18 18"><defs><radialGradient id="chv" cx="0.32" cy="0.28" r="0.85"><stop offset="0" stop-color="#eeeef4"/><stop offset="0.45" stop-color="#b4b4cc"/><stop offset="1" stop-color="#7e7ea2"/></radialGradient></defs><circle cx="9" cy="9" r="8.6" fill="url(#chv)"/><path d="M3 14.6A8.2 8.2 0 0 0 17 11" fill="none" stroke="#f4f4f8" stroke-width="1"/><path d="M11.2 5 7.2 9 11.2 13" fill="none" stroke="#fff" stroke-width="2.2"/></svg>
<svg style="position:absolute;left:1180px;top:776px;" width="17" height="17" viewBox="0 0 17 17"><circle cx="11.5" cy="5.5" r="5.3" fill="#e8261c"/><text x="11.5" y="7.5" font-size="5.5" font-weight="bold" fill="#fff" text-anchor="middle" font-family="Liberation Sans,sans-serif">AIM</text><g transform="translate(0,1.5)"><circle cx="4.4" cy="6.2" r="1.7" fill="#f4d81c" stroke="#6a5a00" stroke-width="0.5"/><path d="M4.6 8 5 11M5 11 1 14.6M5 11 9 14M1.2 9.6 4.8 9 8.4 8" stroke="#6a5a00" stroke-width="2.6" fill="none" stroke-linecap="round"/><path d="M4.6 8 5 11M5 11 1 14.6M5 11 9 14M1.2 9.6 4.8 9 8.4 8" stroke="#f4d81c" stroke-width="1.6" fill="none" stroke-linecap="round"/></g></svg>
<svg style="position:absolute;left:1198px;top:776.5px;" width="17" height="16" viewBox="0 0 17 16"><defs><linearGradient id="bub" x1="0" y1="0" x2="0" y2="1"><stop offset="0" stop-color="#fbfbfb"/><stop offset="1" stop-color="#cfcfcf"/></linearGradient></defs><path d="M8.2 0.9C12.6 0.9 15.8 3.4 15.8 6.6C15.8 9.6 13 12 9.4 12.2C8 13.4 6.4 14.6 4.4 14.8C5.4 13.8 5.8 12.8 5.6 11.8C2.6 11 0.8 9 0.8 6.6C0.8 3.4 4 0.9 8.2 0.9z" fill="url(#bub)" stroke="#808080" stroke-width="1.4"/></svg>
<svg style="position:absolute;left:1216px;top:776px;" width="17" height="17" viewBox="0 0 17 17"><path d="M8.5 13.6 0.9 5.6Q8.5-1.4 16.1 5.6z" fill="#fdfdfd" stroke="#1a1a1a" stroke-width="1.2" stroke-linejoin="round"/><path d="M3.2 7.6Q8.5 2.6 13.8 7.6M5.4 9.8Q8.5 6.8 11.6 9.8" fill="none" stroke="#1a1a1a" stroke-width="1.3"/><path d="M5.6 12V16.4H11.4V12L8.5 9.4z" fill="#12c612" stroke="#063d06" stroke-width="0.9"/></svg>
<span class="t" style="left:1238.8px;top:778px;font-size:11px;letter-spacing:-0.013px;">03:49</span>
<div style="position:absolute;left:73px;top:155px;width:105px;height:40px;box-sizing:border-box;border:1px solid #77779b;background:#fff;"></div>
<div style="position:absolute;left:74px;top:156px;width:103px;height:13px;background:linear-gradient(to bottom,#aeaec8 0,#b4b4cc 25%,#c6c6d9 55%,#e2e2ec 85%,#f4f4f8 100%);"></div>
<div style="position:absolute;left:75px;top:169px;width:101px;height:24px;box-sizing:border-box;border:1px solid #8585a8;background:#e0dfe3;"></div>
<div style="position:absolute;left:160px;top:157px;width:13px;height:13.6px;box-sizing:border-box;border:1px solid #a9434d;border-radius:3.5px;background:linear-gradient(135deg,#e9a09c 0,#d4585e 40%,#c2444c 100%);"></div><svg style="position:absolute;left:160px;top:157px;" width="13" height="13" viewBox="0 0 13 13"><path d="M3.6 3.6 9.4 9.4M9.4 3.6 3.6 9.4" stroke="#fff" stroke-width="2"/></svg>
<svg style="position:absolute;left:83px;top:172px;" width="10" height="17" viewBox="0 0 10 17"><path d="M4.5 0.5 8.6 8.2 6.6 12.2H2.4L0.4 8.2z" fill="#fff" stroke="#111" stroke-width="0.85"/><path d="M4.5 1V7" stroke="#111" stroke-width="0.9"/><circle cx="4.5" cy="7.6" r="0.9" fill="#111"/><path d="M1 12.8H8" stroke="#111" stroke-width="1.4"/><path d="M2.6 13.4V16.4M6.4 13.4V16.4" stroke="#111" stroke-width="1.3"/><path d="M3.4 14H5.6V16.4H3.4z" fill="#555"/></svg>
<svg style="position:absolute;left:108px;top:172px;" width="15" height="17" viewBox="0 0 15 17"><path d="M4.5 0.5 8.6 8.2 6.6 12.2H2.4L0.4 8.2z" fill="#fff" stroke="#111" stroke-width="0.85"/><path d="M4.5 1V7" stroke="#111" stroke-width="0.9"/><circle cx="4.5" cy="7.6" r="0.9" fill="#111"/><path d="M1 12.8H8" stroke="#111" stroke-width="1.4"/><path d="M2.6 13.4V16.4M6.4 13.4V16.4" stroke="#111" stroke-width="1.3"/><path d="M3.4 14H5.6V16.4H3.4z" fill="#555"/><path d="M9.8 4.6H14.2M12 2.4V6.8" stroke="#111" stroke-width="1.3"/></svg>
<svg style="position:absolute;left:133px;top:172px;" width="15" height="17" viewBox="0 0 15 17"><path d="M4.5 0.5 8.6 8.2 6.6 12.2H2.4L0.4 8.2z" fill="#fff" stroke="#111" stroke-width="0.85"/><path d="M4.5 1V7" stroke="#111" stroke-width="0.9"/><circle cx="4.5" cy="7.6" r="0.9" fill="#111"/><path d="M1 12.8H8" stroke="#111" stroke-width="1.4"/><path d="M2.6 13.4V16.4M6.4 13.4V16.4" stroke="#111" stroke-width="1.3"/><path d="M3.4 14H5.6V16.4H3.4z" fill="#555"/><path d="M9.4 4.6H14" stroke="#111" stroke-width="1.3"/></svg>
<svg style="position:absolute;left:159px;top:175px;" width="9" height="13" viewBox="0 0 9 13"><path d="M1 12V1L8 7.6" fill="none" stroke="#111" stroke-width="1.1"/></svg>
<div style="position:absolute;left:41px;top:283px;width:63px;height:440px;box-sizing:border-box;border:1px solid #77779b;background:#fff;"></div>
<div style="position:absolute;left:42px;top:284px;width:61px;height:13px;background:linear-gradient(to bottom,#aeaec8 0,#b4b4cc 25%,#c6c6d9 55%,#e2e2ec 85%,#f4f4f8 100%);"></div>
<div style="position:absolute;left:43px;top:297px;width:59px;height:424px;box-sizing:border-box;border:1px solid #8585a8;background:#e0dfe3;"></div>
<div style="position:absolute;left:44px;top:299px;width:57px;height:23px;background:#fff;overflow:hidden;"><svg style="position:absolute;left:0px;top:0px;" width="57" height="23" viewBox="0 0 57 23"><defs><linearGradient id="fl" x1="0" y1="0" x2="1" y2="0"><stop offset="0" stop-color="#f9a646"/><stop offset="0.28" stop-color="#fbc270"/><stop offset="0.55" stop-color="#fde2bc"/><stop offset="0.8" stop-color="#fdebd0"/><stop offset="1" stop-color="#fac26a"/></linearGradient>
<radialGradient id="fg" cx="0.5" cy="0.5" r="0.5"><stop offset="0" stop-color="#fff" stop-opacity=".95"/><stop offset="0.5" stop-color="#fff3e0" stop-opacity=".55"/><stop offset="1" stop-color="#fff" stop-opacity="0"/></radialGradient>
<filter id="bl" x="-20%" y="-20%" width="140%" height="140%"><feGaussianBlur stdDeviation="0.7"/></filter></defs>
<path d="M12 16.2Q14 12 17 9.6Q16.6 5 17.2 1H58V24H24Q17 21 12 16.2Z" fill="url(#fl)"/>
<path d="M17.4 9.4Q24 3.6 33 6.8Q26 9 21 13.6Q17 15 13 15.8z" fill="#f8a23e" opacity=".55" filter="url(#bl)"/>
<path d="M14 17Q24 12.6 33 14.4Q28 20 24 23.6Q18 21 14 17z" fill="#fbd086" opacity=".8" filter="url(#bl)"/>
<path d="M48 12Q55 14 58 19V24H50Q52 18 48 12z" fill="#f8b24e" opacity=".7" filter="url(#bl)"/>
<circle cx="39" cy="10" r="13" fill="url(#fg)"/>
<g filter="url(#bl)" stroke="#f4626e" stroke-linecap="round" opacity=".6"><path d="M38 11.2L28 1.4M38 11.2L41.6 1.2M38 11.2L54.6 5.4M38 11.2L49 20M38 11.2L37.6 23M38 11.2L24 14.4" stroke-width="1.1"/><path d="M38 11.2L33 6.2M38 11.2L39.8 6M38 11.2L46 8.4M38 11.2L43.6 15.8M38 11.2L37.8 17M38 11.2L31 12.8" stroke-width="2"/></g>
<circle cx="38" cy="11.2" r="1.6" fill="#fbd0d0" filter="url(#bl)"/></svg></div>
<div style="position:absolute;left:44px;top:322px;width:57px;height:1px;background:#111;"></div>
<div style="position:absolute;left:46px;top:370px;width:52px;height:1px;background:#a9a8b0;"></div>
<div style="position:absolute;left:46px;top:371px;width:52px;height:1px;background:#f4f4f6;"></div>
<div style="position:absolute;left:46px;top:437px;width:52px;height:1px;background:#a9a8b0;"></div>
<div style="position:absolute;left:46px;top:438px;width:52px;height:1px;background:#f4f4f6;"></div>
<div style="position:absolute;left:46px;top:483px;width:52px;height:1px;background:#a9a8b0;"></div>
<div style="position:absolute;left:46px;top:484px;width:52px;height:1px;background:#f4f4f6;"></div>
<div style="position:absolute;left:46px;top:508px;width:52px;height:1px;background:#a9a8b0;"></div>
<div style="position:absolute;left:46px;top:509px;width:52px;height:1px;background:#f4f4f6;"></div>
<div style="position:absolute;left:46px;top:575px;width:52px;height:1px;background:#a9a8b0;"></div>
<div style="position:absolute;left:46px;top:576px;width:52px;height:1px;background:#f4f4f6;"></div>
<div style="position:absolute;left:46px;top:621px;width:52px;height:1px;background:#a9a8b0;"></div>
<div style="position:absolute;left:46px;top:622px;width:52px;height:1px;background:#f4f4f6;"></div>
<div style="position:absolute;left:46px;top:674px;width:52px;height:1px;background:#a9a8b0;"></div>
<div style="position:absolute;left:46px;top:675px;width:52px;height:1px;background:#f4f4f6;"></div>
<div style="position:absolute;left:46px;top:695px;width:52px;height:1px;background:#a9a8b0;"></div>
<div style="position:absolute;left:46px;top:696px;width:52px;height:1px;background:#f4f4f6;"></div>
<svg style="position:absolute;left:54px;top:331px;" width="10" height="15" viewBox="0 0 10 15"><path d="M1 0.6V12L3.8 9.4 5.8 14 7.6 13.2 5.6 8.8H9.2z" fill="#111"/></svg>
<svg style="position:absolute;left:80px;top:331px;" width="10" height="15" viewBox="0 0 10 15"><path d="M1 0.8V11.6L3.8 9.2 5.8 13.8 7.4 13 5.4 8.6H9z" fill="#fff" stroke="#111" stroke-width="1"/></svg>
<svg style="position:absolute;left:93px;top:343px;" width="5" height="5" viewBox="0 0 5 5"><path d="M0.2 5 3.6 5 3.6 1.6z" fill="#111"/></svg>
<svg style="position:absolute;left:50px;top:351px;" width="17" height="15" viewBox="0 0 17 15"><path d="M7 6.4 16 14.4" stroke="#111" stroke-width="2"/><path d="M5.4 1V9.6M1 5.2H9.8M2.4 2.2 8.4 8.2M8.4 2.2 2.4 8.2" stroke="#222" stroke-width="0.8"/><circle cx="5.4" cy="5.2" r="1.3" fill="#fff" stroke="#111" stroke-width="0.7"/></svg>
<svg style="position:absolute;left:77px;top:351px;" width="17" height="15" viewBox="0 0 17 15"><path d="M3.6 8.6C0 6.4 1.2 2.4 7 1.2C12.6 0.2 16.4 2.2 15.6 5.4C15 7.6 12.4 8.4 10.4 8.6" fill="none" stroke="#111" stroke-width="1.1"/><path d="M3.6 8.4C2.2 9.6 3 11 4 10.4C5 9.8 4.4 8.4 3.6 8.6C3.4 11 3 13 1.8 14.4" fill="none" stroke="#111" stroke-width="1"/><path d="M8.4 5.8V14.2L10.8 12 13.8 11.8z" fill="#fff" stroke="#111" stroke-width="1.1"/><path d="M4.6 8.8H8" stroke="#111" stroke-width="1"/></svg>
<svg style="position:absolute;left:55px;top:375px;" width="15" height="17" viewBox="0 0 15 17"><path d="M4.5 0.5 8.6 8.2 6.6 12.2H2.4L0.4 8.2z" fill="#fff" stroke="#111" stroke-width="0.85"/><path d="M4.5 1V7" stroke="#111" stroke-width="0.9"/><circle cx="4.5" cy="7.6" r="0.9" fill="#111"/><path d="M1 12.8H8" stroke="#111" stroke-width="1.4"/><path d="M2.6 13.4V16.4M6.4 13.4V16.4" stroke="#111" stroke-width="1.3"/><path d="M3.4 14H5.6V16.4H3.4z" fill="#555"/><path d="M10 4H13.8" stroke="#111" stroke-width="1.2"/></svg>
<svg style="position:absolute;left:68px;top:388px;" width="5" height="5" viewBox="0 0 5 5"><path d="M0.2 5 3.6 5 3.6 1.6z" fill="#111"/></svg>
<span class="t" style="left:78.6px;top:372.5px;font-size:19px;font-family:'Liberation Serif',serif;line-height:20px;">T</span>
<svg style="position:absolute;left:93px;top:388px;" width="5" height="5" viewBox="0 0 5 5"><path d="M0.2 5 3.6 5 3.6 1.6z" fill="#111"/></svg>
<svg style="position:absolute;left:52px;top:398px;" width="16" height="16" viewBox="0 0 16 16"><path d="M1 0.8 13.8 13.6" stroke="#111" stroke-width="1.4"/></svg>
<svg style="position:absolute;left:66px;top:410px;" width="5" height="5" viewBox="0 0 5 5"><path d="M0.2 5 3.6 5 3.6 1.6z" fill="#111"/></svg>
<div style="position:absolute;left:73px;top:395px;width:24px;height:20px;box-sizing:border-box;border:1px solid #c4c2ae;border-radius:4px;background:#eeede3;"></div>
<svg style="position:absolute;left:79px;top:399.6px;" width="14" height="12" viewBox="0 0 14 12"><defs><radialGradient id="eg" cx="0.38" cy="0.32" r="0.75"><stop offset="0" stop-color="#fff"/><stop offset="0.55" stop-color="#d6d6d6"/><stop offset="1" stop-color="#7c7c7c"/></radialGradient></defs><ellipse cx="7" cy="6" rx="6.4" ry="5.3" fill="url(#eg)" stroke="#111" stroke-width="1.1"/></svg>
<svg style="position:absolute;left:93px;top:410.5px;" width="5" height="5" viewBox="0 0 5 5"><path d="M0.2 5 3.6 5 3.6 1.6z" fill="#111"/></svg>
<svg style="position:absolute;left:52px;top:419px;" width="18" height="15" viewBox="0 0 18 15"><path d="M16.8 0.6 8.6 8.4" stroke="#333" stroke-width="1.8"/><path d="M16.4 1.4 9.4 8" stroke="#ddd" stroke-width="0.6"/><path d="M9.4 7.4C7 8 5.4 10 4 12C3 13.2 1.6 13.6 0.6 13.4C3 14.6 6.4 14.4 8.4 12.4C9.8 11 10.4 9.4 10.4 8.4z" fill="#555" stroke="#111" stroke-width="0.8"/></svg>
<svg style="position:absolute;left:77px;top:419px;" width="16" height="15" viewBox="0 0 16 15"><path d="M1 14 2.6 9.6 11 1.2C12 0.4 14.4 2.4 13.6 3.6L5.2 12.2z" fill="#fff" stroke="#111" stroke-width="1"/><path d="M2.6 9.6 5.2 12.2M9.4 2.8 12 5.4M10.6 1.6 13.2 4.2" stroke="#111" stroke-width="0.8"/><path d="M1 14 1.8 11.8 3.2 13.2z" fill="#111"/><path d="M4 10.8 11 3.8" stroke="#888" stroke-width="1"/></svg>
<svg style="position:absolute;left:93px;top:431px;" width="5" height="5" viewBox="0 0 5 5"><path d="M0.2 5 3.6 5 3.6 1.6z" fill="#111"/></svg>
<svg style="position:absolute;left:53px;top:444px;" width="15" height="15" viewBox="0 0 15 15"><circle cx="7.4" cy="8" r="5.8" fill="none" stroke="#111" stroke-width="1.5" stroke-dasharray="1.4 2"/><path d="M2.4 5.6C4 2.4 8.6 1.4 11.6 4" fill="none" stroke="#111" stroke-width="1.3"/><path d="M0.8 2.6 5.2 3 3 6.6z" fill="#111"/></svg>
<svg style="position:absolute;left:68px;top:455px;" width="5" height="5" viewBox="0 0 5 5"><path d="M0.2 5 3.6 5 3.6 1.6z" fill="#111"/></svg>
<svg style="position:absolute;left:77px;top:444px;" width="17" height="14" viewBox="0 0 17 14"><rect x="0.6" y="0.6" width="11.6" height="8.6" fill="#eee" stroke="#111" stroke-width="1.1"/><path d="M0.6 9.8H12.4" stroke="#111" stroke-width="1.2"/><rect x="9.5" y="6.5" width="6" height="6" fill="#ccc" fill-opacity=".7" stroke="#666" stroke-width="1"/><path d="M2.4 2.2 8.2 7.4" stroke="#111" stroke-width="1.2"/><path d="M1.8 1.6H5.6L1.8 5z" fill="#111"/></svg>
<svg style="position:absolute;left:93px;top:455px;" width="5" height="5" viewBox="0 0 5 5"><path d="M0.2 5 3.6 5 3.6 1.6z" fill="#111"/></svg>
<svg style="position:absolute;left:53px;top:464px;" width="17" height="17" viewBox="0 0 17 17"><g fill="#4a4a4a" shape-rendering="crispEdges"><rect x="4" y="3" width="1.2" height="1.2"/><rect x="6.2" y="2" width="1.2" height="1.2"/><rect x="3" y="5" width="1.2" height="1.2"/><rect x="5.2" y="4.4" width="1.2" height="1.2"/><rect x="7.4" y="3.8" width="1.2" height="1.2"/><rect x="4.2" y="6.6" width="1.2" height="1.2"/><rect x="6.4" y="6" width="1.2" height="1.2"/><rect x="3.4" y="8.4" width="1.2" height="1.2"/><rect x="5.4" y="8" width="1.2" height="1.2"/></g><path d="M14.3 0.4C15.7 5 14.4 10 10.4 11L7.2 11.4C5.2 13 3.8 14.4 2.8 15L1.9 14L9 2.2C10 0.4 12.6 -0.2 14.3 0.4z" fill="#fbfbfb"/><path d="M14.3 0.4C15.7 5 14.4 10 10.4 11L7.2 11.4" fill="none" stroke="#111" stroke-width="1.3"/><path d="M11.6 6.2C10.6 8.4 9.6 9.4 7.6 10" fill="none" stroke="#111" stroke-width="1.1"/><path d="M0.3 6.8Q2 10 2.5 14.6Q6 15.8 11.2 16.4" fill="none" stroke="#111" stroke-width="1.1"/><path d="M2.6 14.8 8.4 8.6" stroke="#555" stroke-width="0.8"/></svg>
<svg style="position:absolute;left:68px;top:476.5px;" width="5" height="5" viewBox="0 0 5 5"><path d="M0.2 5 3.6 5 3.6 1.6z" fill="#111"/></svg>
<svg style="position:absolute;left:77px;top:466px;" width="17" height="13" viewBox="0 0 17 13"><path d="M5.5 1V11M5 1.5H15M5 10.5H15M14.5 1V11" fill="none" stroke="#333" stroke-width="1" stroke-dasharray="1 1" shape-rendering="crispEdges"/><g fill="#000" shape-rendering="crispEdges"><rect x="4" y="0" width="2" height="2"/><rect x="9" y="0" width="2" height="2"/><rect x="14" y="0" width="2" height="2"/><rect x="14" y="5" width="2" height="2"/><rect x="4" y="10" width="2" height="2"/><rect x="9" y="10" width="2" height="2"/><rect x="14" y="10" width="2" height="2"/></g><defs><linearGradient id="fta" x1="0" y1="0" x2="1" y2="0"><stop offset="0" stop-color="#7a7a7a"/><stop offset="0.5" stop-color="#111"/><stop offset="1" stop-color="#000"/></linearGradient></defs><path d="M0 0V10.8L7.8 7.4z" fill="url(#fta)"/></svg>
<svg style="position:absolute;left:51px;top:489px;" width="16" height="16" viewBox="0 0 16 16"><defs><linearGradient id="spg" x1="0" y1="0" x2="1" y2="0"><stop offset="0" stop-color="#bdbdbd"/><stop offset="0.45" stop-color="#fafafa"/><stop offset="1" stop-color="#9a9a9a"/></linearGradient></defs><rect x="5.8" y="4" width="9" height="11" rx="1.2" fill="url(#spg)" stroke="#555" stroke-width="0.9"/><path d="M5.8 15.2H14.8" stroke="#111" stroke-width="1.2"/><rect x="8.6" y="1.6" width="4.4" height="3" fill="#ddd" stroke="#111" stroke-width="1"/><rect x="9.4" y="0.4" width="3.4" height="1.6" fill="#fff" stroke="#111" stroke-width="0.7"/><circle cx="10.8" cy="10.4" r="2.6" fill="#fff" stroke="#111" stroke-width="1"/><circle cx="10.8" cy="10.4" r="0.9" fill="#111"/><g fill="#111" shape-rendering="crispEdges"><rect x="0" y="0" width="1" height="1"/><rect x="2" y="0" width="1" height="1"/><rect x="4" y="0" width="1" height="1"/><rect x="0" y="2" width="1" height="1"/><rect x="2" y="3" width="1" height="1"/><rect x="4" y="2" width="1" height="1"/><rect x="6" y="1" width="1" height="1"/><rect x="0" y="4" width="1" height="1"/></g></svg>
<svg style="position:absolute;left:68px;top:501px;" width="5" height="5" viewBox="0 0 5 5"><path d="M0.2 5 3.6 5 3.6 1.6z" fill="#111"/></svg>
<svg style="position:absolute;left:76px;top:490px;" width="17" height="14" viewBox="0 0 17 14"><path d="M0.8 0V13H16.4" fill="none" stroke="#111" stroke-width="1.2"/><defs><linearGradient id="bg1" x1="0" y1="0" x2="0" y2="1"><stop offset="0" stop-color="#eee"/><stop offset="1" stop-color="#444"/></linearGradient></defs><rect x="2.6" y="6.4" width="3.4" height="6.2" fill="url(#bg1)" stroke="#111" stroke-width="0.9"/><rect x="7.4" y="5" width="3.4" height="7.6" fill="url(#bg1)" stroke="#111" stroke-width="0.9"/><rect x="12.2" y="2" width="3.4" height="10.6" fill="url(#bg1)" stroke="#111" stroke-width="0.9"/></svg>
<svg style="position:absolute;left:93px;top:501px;" width="5" height="5" viewBox="0 0 5 5"><path d="M0.2 5 3.6 5 3.6 1.6z" fill="#111"/></svg>
<svg style="position:absolute;left:52px;top:516px;" width="16" height="12" viewBox="0 0 16 12"><rect x="0.6" y="0.6" width="14.8" height="10.4" fill="#f6f6f6" stroke="#111" stroke-width="1.1"/><path d="M0.6 7C4 4 6 3 7.4 0.6M7.4 0.6C8 4 9 7 8.4 11M8.4 6C11 4 13 4 15 5.4M0.6 3.6C3 5 5 8 5 11M11 0.6C10.4 4 12.6 8 12 11" fill="none" stroke="#4a4a4a" stroke-width="0.8"/><path d="M0.6 11.6H15.8" stroke="#111" stroke-width="1.2"/></svg>
<svg style="position:absolute;left:77px;top:516px;" width="17" height="12" viewBox="0 0 17 12"><defs><linearGradient id="gg" x1="0" y1="0" x2="1" y2="0"><stop offset="0" stop-color="#fff"/><stop offset="0.28" stop-color="#fdfdfd"/><stop offset="0.6" stop-color="#6e6e6e"/><stop offset="0.85" stop-color="#101010"/><stop offset="1" stop-color="#000"/></linearGradient></defs><rect x="0.6" y="0.6" width="15" height="10.4" fill="url(#gg)" stroke="#111" stroke-width="1.1"/><path d="M0.6 11.6H16" stroke="#111" stroke-width="1.2"/></svg>
<svg style="position:absolute;left:53px;top:534px;" width="16" height="17" viewBox="0 0 16 17"><path d="M1 16 1.6 13.4 8.6 6.4 10.6 8.4 3.6 15.4z" fill="#fff" stroke="#111" stroke-width="1"/><path d="M7.6 5.4 11.6 9.4" stroke="#111" stroke-width="2.2"/><path d="M9.6 6.4C10 4 11.4 1.6 13.4 1C14.8 0.8 15.4 2.4 14.6 3.8C13.8 5.2 12 6.6 10.6 7.4z" fill="#222" stroke="#111" stroke-width="0.8"/></svg>
<svg style="position:absolute;left:68px;top:547px;" width="5" height="5" viewBox="0 0 5 5"><path d="M0.2 5 3.6 5 3.6 1.6z" fill="#111"/></svg>
<svg style="position:absolute;left:76px;top:534px;" width="17" height="17" viewBox="0 0 17 17"><defs><linearGradient id="bsq" x1="0" y1="0" x2="1" y2="1"><stop offset="0" stop-color="#f4f4f4"/><stop offset="1" stop-color="#a8a8a8"/></linearGradient><radialGradient id="bsp" cx="0.35" cy="0.3" r="0.8"><stop offset="0" stop-color="#f6f6f6"/><stop offset="1" stop-color="#8c8c8c"/></radialGradient></defs><rect x="0.6" y="0.6" width="6" height="6" fill="url(#bsq)" stroke="#444" stroke-width="1"/><circle cx="12.6" cy="12.6" r="3.3" fill="url(#bsp)" stroke="#333" stroke-width="1.1"/><g fill="#555" shape-rendering="crispEdges"><rect x="8" y="3" width="1" height="1"/><rect x="10" y="5" width="1" height="1"/><rect x="8" y="5" width="1" height="1"/><rect x="12" y="7" width="1" height="1"/><rect x="10" y="7" width="1" height="1"/><rect x="6" y="8" width="1" height="1"/><rect x="8" y="9" width="1" height="1"/><rect x="4" y="8" width="1" height="1"/><rect x="6" y="10" width="1" height="1"/><rect x="10" y="9" width="1" height="1"/><rect x="8" y="7" width="1" height="1"/><rect x="7" y="11" width="1" height="1"/></g></svg>
<svg style="position:absolute;left:49px;top:555px;" width="21" height="18" viewBox="0 0 21 18"><path d="M3 1.6V7.6M0.2 4.6H5.8M1 2.6 5 6.6M5 2.6 1 6.6" stroke="#111" stroke-width="0.9"/><path d="M5 10.6 11 4 18.6 9.6 12 16.6z" fill="#fff" stroke="#111" stroke-width="1.1"/><path d="M11 4C10 1.4 12 0.4 13 2.6L14 8" fill="none" stroke="#111" stroke-width="1"/><path d="M5 10.6 12 16.6 14 14.6" fill="#eee" stroke="#111" stroke-width="1"/><path d="M18.4 9.6C19.6 11 19.6 13.6 18.6 15.4L17.4 11z" fill="#333" stroke="#111" stroke-width="0.8"/></svg>
<svg style="position:absolute;left:76px;top:555px;" width="19" height="18" viewBox="0 0 19 18"><path d="M3 1.6V7.6M0.2 4.6H5.8M1 2.6 5 6.6M5 2.6 1 6.6" stroke="#111" stroke-width="0.9"/><rect x="4.6" y="4.6" width="9.6" height="8" fill="#aaa" stroke="#111" stroke-width="1.1"/><path d="M9.6 6.4V16.6L12.2 14.2 17.4 13.6z" fill="#fff" stroke="#111" stroke-width="1.1"/></svg>
<svg style="position:absolute;left:51px;top:582px;" width="19" height="15" viewBox="0 0 19 15"><path d="M0.2 13.4 10.6 5.6 12.4 7.4Q8 11.8 0.2 13.4z" fill="#fafafa" stroke="#111" stroke-width="1"/><path d="M10.4 5.8 17.4 0.2 18.2 0.9 12.4 7.6z" fill="#1c1c1c" stroke="#111" stroke-width="0.6"/><path d="M0.2 13.4 10.6 5.6" stroke="#111" stroke-width="1.3"/><path d="M7.2 2.6 12.8 7.8M11 1.2 12.6 2.8" stroke="#111" stroke-width="1.2"/></svg>
<svg style="position:absolute;left:68px;top:592.5px;" width="5" height="5" viewBox="0 0 5 5"><path d="M0.2 5 3.6 5 3.6 1.6z" fill="#111"/></svg>
<svg style="position:absolute;left:76px;top:583px;" width="19" height="11" viewBox="0 0 19 11"><path d="M5.2 7.8 17.8 2.3M5 3.6 17.8 9.6" stroke="#2a2a2a" stroke-width="1.3"/><path d="M8 5.4 17.4 2.9M8 5.9 17.4 9.1" stroke="#8a8a8a" stroke-width="0.6"/><ellipse cx="3" cy="2.8" rx="2.3" ry="1.6" transform="rotate(14 3 2.8)" fill="#e0dfe3" stroke="#222" stroke-width="1.2"/><ellipse cx="3.5" cy="8.7" rx="2.3" ry="1.6" transform="rotate(-14 3.5 8.7)" fill="#e0dfe3" stroke="#222" stroke-width="1.2"/></svg>
<svg style="position:absolute;left:93px;top:592.5px;" width="5" height="5" viewBox="0 0 5 5"><path d="M0.2 5 3.6 5 3.6 1.6z" fill="#111"/></svg>
<svg style="position:absolute;left:51px;top:602px;" width="16" height="16" viewBox="0 0 16 16"><path d="M5.3 15.4C4 12.6 1.4 10 0.5 8C0.2 6.6 1.8 6.4 2.8 7.6L4.8 10L2.6 3.6C2.2 2.2 4 1.6 4.6 3L6.6 7.4L6.7 1.6C6.7 0.2 8.8 0.2 9 1.6L9.2 7.2L10.9 2.6C11.3 1.4 13.2 1.8 12.8 3.2L11.7 8L13.8 4.8C14.6 3.8 16 4.6 15.4 5.8C14 8.8 13.4 11 12.4 15.4Z" fill="#fcfcfc" stroke="#111" stroke-width="1.05" stroke-linejoin="round"/><path d="M6 13.4Q9 14.2 12 13" fill="none" stroke="#bbb" stroke-width="0.8"/></svg>
<svg style="position:absolute;left:68px;top:614px;" width="5" height="5" viewBox="0 0 5 5"><path d="M0.2 5 3.6 5 3.6 1.6z" fill="#111"/></svg>
<svg style="position:absolute;left:77px;top:603px;" width="15" height="15" viewBox="0 0 15 15"><defs><radialGradient id="zg" cx="0.35" cy="0.3" r="0.8"><stop offset="0" stop-color="#fff"/><stop offset="1" stop-color="#bdbdbd"/></radialGradient></defs><circle cx="5.4" cy="5.2" r="4.6" fill="url(#zg)" stroke="#2a2a2a" stroke-width="1.3"/><path d="M8.8 8.6 14 13.8" stroke="#111" stroke-width="2.2"/></svg>
<svg style="position:absolute;left:65px;top:642px;" width="29" height="29" viewBox="0 0 29 29"><rect x="1" y="1" width="26.5" height="26.5" fill="#fff" stroke="#000" stroke-width="1.2"/><rect x="9" y="9" width="10.6" height="10.6" fill="#e0dfe3" stroke="#000" stroke-width="1.1"/><path d="M1.4 27 27 1.4" stroke="#d2101c" stroke-width="1.8"/><rect x="9" y="9" width="10.6" height="10.6" fill="none" stroke="#000" stroke-width="1.1"/></svg>
<svg style="position:absolute;left:51px;top:628px;" width="30" height="30" viewBox="0 0 30 30"><rect x="1" y="1" width="27.4" height="27.4" fill="#fff" stroke="#000" stroke-width="1.3"/><path d="M1.6 27.8 27.8 1.6" stroke="#d2101c" stroke-width="1.8"/></svg>
<svg style="position:absolute;left:84px;top:628px;" width="11" height="10" viewBox="0 0 11 10"><path d="M2.2 3C4 0.6 7.6 1.4 8.4 5.4" fill="none" stroke="#111" stroke-width="1.3"/><path d="M0.4 0.6 4.6 1.6 1.4 4.8z" fill="#111"/><path d="M5.8 5.6 10.6 5.4 8.6 9.6z" fill="#111"/></svg>
<svg style="position:absolute;left:53px;top:659px;" width="11" height="10" viewBox="0 0 11 10"><rect x="3.6" y="3" width="6.4" height="6.4" fill="#fff" stroke="#111" stroke-width="1.9"/><rect x="0.6" y="0.5" width="6" height="5.6" fill="#fff" stroke="#555" stroke-width="0.9"/></svg>
<div style="position:absolute;left:51px;top:680px;width:10px;height:10px;background:#f6cf99;"></div>
<div style="position:absolute;left:67px;top:680px;width:10px;height:10px;background:linear-gradient(to right,#b4b4b8,#7c7c80);"></div>
<div style="position:absolute;left:81px;top:678px;width:16px;height:15px;box-sizing:border-box;border:1px solid #c4c2ae;border-radius:4px;background:#eeede3;"></div>
<svg style="position:absolute;left:84px;top:680.5px;" width="10" height="9" viewBox="0 0 10 9"><rect x="0" y="0" width="10" height="9" fill="#fff"/><path d="M0.6 8.6 9.4 0.4" stroke="#d2101c" stroke-width="1.8"/></svg>
<div style="position:absolute;left:48px;top:700px;width:16px;height:16px;box-sizing:border-box;border:1px solid #c4c2ae;border-radius:4px;background:#eeede3;"></div>
<svg style="position:absolute;left:51px;top:702.5px;" width="10" height="10" viewBox="0 0 10 10"><defs><linearGradient id="sm" x1="0" y1="0" x2="1" y2="1"><stop offset="0" stop-color="#f4f4f4"/><stop offset="1" stop-color="#6e6e6e"/></linearGradient></defs><rect x="0.5" y="0.5" width="9" height="9" rx="1" fill="#cfcfcf" stroke="#111" stroke-width="1"/><path d="M0.5 2.2H9.5" stroke="#111" stroke-width="1"/><rect x="2.4" y="3.8" width="4" height="2.6" fill="#eee" stroke="#222" stroke-width="0.7"/><rect x="4" y="5.2" width="3.8" height="2.6" fill="#ddd" stroke="#222" stroke-width="0.7"/></svg>
<svg style="position:absolute;left:67px;top:702.5px;" width="10" height="10" viewBox="0 0 10 10"><rect x="0.5" y="0.5" width="9.4" height="9" rx="1" fill="url(#sm)" stroke="#111" stroke-width="1"/><path d="M0.5 2.2H9.9" stroke="#111" stroke-width="1.1"/></svg>
<svg style="position:absolute;left:83px;top:702.5px;" width="11" height="10" viewBox="0 0 11 10"><rect x="0.5" y="0.5" width="9.8" height="9" rx="1" fill="url(#sm)" stroke="#111" stroke-width="1"/></svg>
<div style="position:absolute;left:995px;top:211px;width:212px;height:348px;box-sizing:border-box;border:1px solid #77779b;background:#fff;"></div>
<div style="position:absolute;left:996px;top:212px;width:210px;height:14px;background:linear-gradient(to bottom,#aeaec8 0,#b4b4cc 25%,#c6c6d9 55%,#e2e2ec 85%,#f4f4f8 100%);"></div>
<div style="position:absolute;left:1174.5px;top:214px;width:12px;height:12px;box-sizing:border-box;border:1px solid #8282a8;border-radius:3px;background:linear-gradient(135deg,#d6d6e6 0,#b4b4ce 50%,#9c9cbc 100%);"></div><svg style="position:absolute;left:1174.5px;top:214px;" width="12" height="12" viewBox="0 0 12 12"><rect x="2.8" y="6.6" width="6" height="2.2" fill="#23234e"/><rect x="2.8" y="8.8" width="6" height="1" fill="#f2f2f8"/></svg>
<div style="position:absolute;left:1189px;top:213.5px;width:13px;height:13.6px;box-sizing:border-box;border:1px solid #a9434d;border-radius:3.5px;background:linear-gradient(135deg,#e9a09c 0,#d4585e 40%,#c2444c 100%);"></div><svg style="position:absolute;left:1189px;top:213.5px;" width="13" height="13" viewBox="0 0 13 13"><path d="M3.6 3.6 9.4 9.4M9.4 3.6 3.6 9.4" stroke="#fff" stroke-width="2"/></svg>
<div style="position:absolute;left:997px;top:226px;width:208px;height:114px;box-sizing:border-box;border:1px solid #77779b;background:#e0dfe3;"></div>
<div style="position:absolute;left:998px;top:227px;width:206px;height:15px;background:#9b9b9b;"></div><svg style="position:absolute;left:998px;top:227px;overflow:hidden;" width="206" height="15" viewBox="0 0 206 15"><path d="M172 15C180 15 184 6 194 6H206V15z" fill="#e0dfe3"/><path d="M0.10000000000002274 16Q2.6000000000000227 15 2.6000000000000227 11V3.6Q2.6000000000000227 1 5.200000000000022 1H37C48.0 1 48.0 15 59 15V16z" fill="#e0dfe3" stroke="#fbfbfc" stroke-width="0.9"/></svg><svg style="position:absolute;left:1004.1999999999999px;top:230.4px;" width="7" height="9" viewBox="0 0 7 9"><path d="M0.4 3.6 3.6 0.4 6.8 3.6zM0.4 5.6 3.6 8.8 6.8 5.6z" fill="#333"/></svg><span class="t" style="left:1012.8px;top:228px;font-size:11px;letter-spacing:-0.456px;">Color</span>
<svg style="position:absolute;left:1190px;top:232px;" width="11" height="11" viewBox="0 0 11 11"><circle cx="5.5" cy="5.5" r="4.9" fill="#f6f6f8" stroke="#444" stroke-width="0.9"/><path d="M4.2 2.9 7.9 5.5 4.2 8.1z" fill="#111"/></svg>
<svg style="position:absolute;left:1012px;top:259px;" width="21" height="20" viewBox="0 0 21 20"><rect x="0.8" y="0.8" width="18.4" height="17.6" fill="#fff" stroke="#000" stroke-width="1.1"/><rect x="6" y="6" width="8" height="7.2" fill="#e0dfe3" stroke="#000" stroke-width="1"/><path d="M1 18.2 6 13.6M14 6 19 1.2" stroke="#d2101c" stroke-width="1.6"/></svg>
<svg style="position:absolute;left:1003px;top:250px;" width="21" height="20" viewBox="0 0 21 20"><rect x="0.8" y="0.8" width="18.6" height="17.6" fill="#fff" stroke="#000" stroke-width="1.2"/><path d="M1.2 18 19 1.2" stroke="#d2101c" stroke-width="1.6"/></svg>
<span class="t" style="left:1041.6px;top:251.9px;font-size:9.5px;line-height:14px;">R</span>
<div style="position:absolute;left:1051px;top:256px;width:102px;height:6px;box-sizing:border-box;border:1px solid #000;border-bottom-width:1.3px;background:#e0dfe3;"></div>
<div style="position:absolute;left:1158px;top:250px;width:35px;height:18px;box-sizing:border-box;border:1px solid #a7afba;background:#fff;"></div>
<span class="t" style="left:1040.2px;top:273.9px;font-size:9.5px;line-height:14px;">G</span>
<div style="position:absolute;left:1051px;top:278px;width:102px;height:6px;box-sizing:border-box;border:1px solid #000;border-bottom-width:1.3px;background:#e0dfe3;"></div>
<div style="position:absolute;left:1158px;top:272px;width:35px;height:18px;box-sizing:border-box;border:1px solid #a7afba;background:#fff;"></div>
<span class="t" style="left:1041.8px;top:295.9px;font-size:9.5px;line-height:14px;">B</span>
<div style="position:absolute;left:1051px;top:300px;width:102px;height:6px;box-sizing:border-box;border:1px solid #000;border-bottom-width:1.3px;background:#e0dfe3;"></div>
<div style="position:absolute;left:1158px;top:294px;width:35px;height:18px;box-sizing:border-box;border:1px solid #a7afba;background:#fff;"></div>
<svg style="position:absolute;left:1006px;top:300.5px;" width="11" height="8" viewBox="0 0 11 8"><path d="M3.4 7.4V1.4M0.8 3.8 3.4 0.8 6 3.8M3.4 7H6" fill="none" stroke="#111" stroke-width="1.3"/><rect x="7.2" y="6.2" width="1.2" height="1.2" fill="#111"/><rect x="9.4" y="6.2" width="1.2" height="1.2" fill="#111"/></svg>
<div style="position:absolute;left:1019px;top:301px;width:13px;height:13px;box-sizing:border-box;border:1px solid #333;background:#f6cf99;"></div>
<div style="position:absolute;left:1000px;top:319px;width:202px;height:17px;box-sizing:border-box;border:1px solid #000;background:#000;"></div>
<div style="position:absolute;left:1001px;top:320px;width:16px;height:15px;background:#fff;"></div>
<svg style="position:absolute;left:1001px;top:320px;" width="16" height="15" viewBox="0 0 16 15"><path d="M0.4 14.6 15.6 0.4" stroke="#d2101c" stroke-width="1.7"/></svg>
<div style="position:absolute;left:1018px;top:320px;width:167px;height:15px;background:linear-gradient(to bottom,rgba(255,255,255,.9) 0,rgba(255,255,255,0) 42%,rgba(0,0,0,0) 52%,rgba(0,0,0,.95) 100%),linear-gradient(to right,#f00 0,#ff0 16%,#0f0 33%,#0ff 50%,#00f 66%,#f0f 83%,#f00 100%);"></div>
<div style="position:absolute;left:1185px;top:320px;width:16px;height:8px;background:#fff;"></div>
<div style="position:absolute;left:997px;top:342px;width:208px;height:101px;box-sizing:border-box;border:1px solid #77779b;background:#e0dfe3;"></div>
<div style="position:absolute;left:998px;top:343px;width:206px;height:16px;background:#9b9b9b;"></div><svg style="position:absolute;left:998px;top:343px;overflow:hidden;" width="206" height="16" viewBox="0 0 206 16"><path d="M172 16C180 16 184 7 194 7H206V16z" fill="#e0dfe3"/><path d="M56.0 17Q58.5 16 58.5 12V3.6Q58.5 1 61.1 1H98.5C102.04999999999995 1 102.04999999999995 16 105.59999999999991 16V17z" fill="#c3c2c5" stroke="#e9e9ea" stroke-width="0.9"/><path d="M58.5 16V3.6" stroke="#6e6e6e" stroke-width="1"/><path d="M102.70000000000005 17Q105.20000000000005 16 105.20000000000005 12V3.6Q105.20000000000005 1 107.80000000000004 1H148.4000000000001C155.70000000000005 1 155.70000000000005 16 163 16V17z" fill="#c3c2c5" stroke="#e9e9ea" stroke-width="0.9"/><path d="M105.20000000000005 16V3.6" stroke="#6e6e6e" stroke-width="1"/><path d="M-1.7000000000000455 17Q0.7999999999999545 16 0.7999999999999545 12V3.6Q0.7999999999999545 1 3.3999999999999546 1H50.40000000000009C55.60000000000002 1 55.60000000000002 16 60.799999999999955 16V17z" fill="#e0dfe3" stroke="#fbfbfc" stroke-width="0.9"/></svg><span class="t" style="left:1006.8px;top:344px;font-size:11px;letter-spacing:-0.802px;">Swatches</span><span class="t" style="left:1060.5px;top:344px;font-size:11px;color:#333;letter-spacing:-0.868px;">Brushes</span><span class="t" style="left:1107.4px;top:344px;font-size:11px;color:#333;letter-spacing:-0.627px;">Symbols</span>
<svg style="position:absolute;left:1190px;top:347.5px;" width="11" height="11" viewBox="0 0 11 11"><circle cx="5.5" cy="5.5" r="4.9" fill="#f6f6f8" stroke="#444" stroke-width="0.9"/><path d="M4.2 2.9 7.9 5.5 4.2 8.1z" fill="#111"/></svg>
<div style="position:absolute;left:998px;top:359px;width:206px;height:2px;background:#111;"></div>
<div style="position:absolute;left:998px;top:361px;width:14px;height:15px;background:#fff;"></div>
<svg style="position:absolute;left:998px;top:361px;" width="14" height="15" viewBox="0 0 14 15"><path d="M0.2 14.6 13.8 0.4" stroke="#d2101c" stroke-width="1.7"/></svg>
<div style="position:absolute;left:1013px;top:361px;width:15px;height:15px;background:#fff;"></div>
<svg style="position:absolute;left:1013px;top:361px;" width="15" height="15" viewBox="0 0 15 15"><circle cx="7.5" cy="7.5" r="4.6" fill="none" stroke="#000" stroke-width="1.1"/><path d="M7.5 1.4V13.6M1.4 7.5H13.6" stroke="#000" stroke-width="1"/><circle cx="7.5" cy="7.5" r="1.2" fill="#fff" stroke="#000" stroke-width="0.7"/></svg>
<div style="position:absolute;left:1029px;top:361px;width:15px;height:15px;background:linear-gradient(to right,#10259a,#1a2258 60%,#20242e);"></div>
<div style="position:absolute;left:1045px;top:361px;width:15px;height:15px;background:linear-gradient(to right,#20242e,#1a2258 40%,#10259a);"></div>
<div style="position:absolute;left:1061px;top:361px;width:15px;height:15px;background:linear-gradient(to right,#7e8084,#c4c5c8);"></div>
<div style="position:absolute;left:1077px;top:361px;width:15px;height:15px;background:linear-gradient(to right,#c4c5c8,#7e8084);"></div>
<div style="position:absolute;left:998px;top:376px;width:95px;height:1px;background:#111;"></div>
<div style="position:absolute;left:1012px;top:361px;width:1px;height:15px;background:#111;"></div>
<div style="position:absolute;left:1028px;top:361px;width:1px;height:15px;background:#111;"></div>
<div style="position:absolute;left:1044px;top:361px;width:1px;height:15px;background:#111;"></div>
<div style="position:absolute;left:1060px;top:361px;width:1px;height:15px;background:#111;"></div>
<div style="position:absolute;left:1076px;top:361px;width:1px;height:15px;background:#111;"></div>
<div style="position:absolute;left:1092px;top:361px;width:1px;height:15px;background:#111;"></div>
<div style="position:absolute;left:1189px;top:361px;width:15px;height:63px;background:#f5f5f8;"></div>
<div style="position:absolute;left:1190px;top:362px;width:14px;height:14px;box-sizing:border-box;border:1px solid #d6d5c8;border-radius:2px;background:#ecebe2;"></div>
<svg style="position:absolute;left:1193.4px;top:366.5px;" width="8" height="5" viewBox="0 0 8 5"><path d="M0 4.2 3.7 0.6 7.4 4.2" fill="none" stroke="#c0bfb2" stroke-width="1.8"/></svg>
<div style="position:absolute;left:1190px;top:409px;width:14px;height:14px;box-sizing:border-box;border:1px solid #d6d5c8;border-radius:2px;background:#ecebe2;"></div>
<svg style="position:absolute;left:1193.4px;top:414px;" width="8" height="5" viewBox="0 0 8 5"><path d="M0 0.4 3.7 4 7.4 0.4" fill="none" stroke="#c0bfb2" stroke-width="1.8"/></svg>
<div style="position:absolute;left:998px;top:424px;width:191px;height:1px;background:#111;"></div>
<div style="position:absolute;left:999px;top:426px;width:30px;height:13px;box-sizing:border-box;border:1px solid #c4c2ae;border-radius:4px;background:#eeede3;"></div>
<svg style="position:absolute;left:1008px;top:427px;" width="12" height="11" viewBox="0 0 12 11"><rect x="0.6" y="0.6" width="4.6" height="4.6" fill="#aaa" stroke="#222" stroke-width="0.8"/><rect x="3.6" y="2.8" width="4.6" height="4.6" fill="#666" stroke="#111" stroke-width="0.8"/><rect x="6.4" y="5.2" width="4.6" height="4.6" fill="#222" stroke="#000" stroke-width="0.8"/></svg>
<div style="position:absolute;left:1040px;top:427px;width:10px;height:10px;box-sizing:border-box;border:1px solid #333;background:#8e8e8e;"></div>
<div style="position:absolute;left:1071px;top:427px;width:10px;height:10px;box-sizing:border-box;border:1px solid #333;background:linear-gradient(to right,#fff,#222);"></div>
<svg style="position:absolute;left:1102px;top:427px;" width="10" height="10" viewBox="0 0 10 10"><rect x="0.5" y="0.5" width="9" height="9" fill="#ddd" stroke="#222" stroke-width="1"/><path d="M0.5 3.5H9.5M0.5 6.5H9.5M3.5 0.5V9.5M6.5 0.5V9.5M1 1 9 9M9 1 1 9" stroke="#222" stroke-width="0.9"/></svg>
<svg style="position:absolute;left:1138px;top:428px;" width="10" height="10" viewBox="0 0 10 10"><path d="M0.6 0.6H9.4V9.4H0.6z" fill="#ecebe4" stroke="#c8c7ba" stroke-width="1"/><path d="M9.6 1V9.6H1" fill="none" stroke="#a8a79a" stroke-width="1"/><rect x="2.6" y="5" width="3.4" height="3.4" fill="none" stroke="#a8a79a" stroke-width="0.8"/></svg>
<svg style="position:absolute;left:1168px;top:426.5px;" width="11" height="12" viewBox="0 0 11 12"><path d="M1.6 3.4 2.6 11H8.4L9.4 3.4" fill="#f0efe8" stroke="#b4b3a6" stroke-width="1"/><ellipse cx="5.5" cy="3" rx="4.4" ry="1.6" fill="#f6f5ee" stroke="#a8a79a" stroke-width="1"/><path d="M4 5.6V10M5.5 5.6V10M7 5.6V10" stroke="#bcbbae" stroke-width="0.8"/></svg>
<svg style="position:absolute;left:1193px;top:429px;" width="10" height="10" viewBox="0 0 10 10"><g fill="#c4c1a0"><rect x="8" y="0" width="2" height="2"/><rect x="4" y="4" width="2" height="2"/><rect x="8" y="4" width="2" height="2"/><rect x="0" y="8" width="2" height="2"/><rect x="4" y="8" width="2" height="2"/><rect x="8" y="8" width="2" height="2"/></g></svg>
<div style="position:absolute;left:997px;top:443px;width:208px;height:114px;box-sizing:border-box;border:1px solid #77779b;background:#e0dfe3;"></div>
<div style="position:absolute;left:998px;top:444px;width:206px;height:15px;background:#9b9b9b;"></div><svg style="position:absolute;left:998px;top:444px;overflow:hidden;" width="206" height="15" viewBox="0 0 206 15"><path d="M172 15C180 15 184 6 194 6H206V15z" fill="#e0dfe3"/><path d="M-0.20000000000004547 16Q2.2999999999999545 15 2.2999999999999545 11V3.6Q2.2999999999999545 1 4.899999999999954 1H39.299999999999955C41.94999999999993 1 41.94999999999993 15 44.59999999999991 15V16z" fill="#c3c2c5" stroke="#e9e9ea" stroke-width="0.9"/><path d="M2.2999999999999545 15V3.6" stroke="#6e6e6e" stroke-width="1"/><path d="M103.09999999999991 16Q105.59999999999991 15 105.59999999999991 11V3.6Q105.59999999999991 1 108.1999999999999 1H169C174.5 1 174.5 15 180 15V16z" fill="#c3c2c5" stroke="#e9e9ea" stroke-width="0.9"/><path d="M105.59999999999991 15V3.6" stroke="#6e6e6e" stroke-width="1"/><path d="M42.90000000000009 16Q45.40000000000009 15 45.40000000000009 11V3.6Q45.40000000000009 1 48.00000000000009 1H98.59999999999991C102.5 1 102.5 15 106.40000000000009 15V16z" fill="#e0dfe3" stroke="#fbfbfc" stroke-width="0.9"/></svg><span class="t" style="left:1006.7px;top:445px;font-size:11px;color:#333;letter-spacing:-0.402px;">Stroke</span><svg style="position:absolute;left:1046.4px;top:447.4px;" width="7" height="9" viewBox="0 0 7 9"><path d="M0.4 3.6 3.6 0.4 6.8 3.6zM0.4 5.6 3.6 8.8 6.8 5.6z" fill="#333"/></svg><span class="t" style="left:1055px;top:445px;font-size:11px;letter-spacing:-0.615px;">Gradient</span><span class="t" style="left:1105.2px;top:445px;font-size:11px;color:#333;letter-spacing:-0.531px;">Transparency</span>
<svg style="position:absolute;left:1190px;top:449px;" width="11" height="11" viewBox="0 0 11 11"><circle cx="5.5" cy="5.5" r="4.9" fill="#f6f6f8" stroke="#444" stroke-width="0.9"/><path d="M4.2 2.9 7.9 5.5 4.2 8.1z" fill="#111"/></svg>
<div style="position:absolute;left:1004px;top:467px;width:28px;height:28px;box-sizing:border-box;border:1px solid #000;box-shadow:1px 1px 0 #f4f4f6;background:linear-gradient(to right,#b8b9bc,#77787c);"></div>
<span class="t" style="left:1036.4px;top:472px;font-size:11px;letter-spacing:-0.384px;">Type:</span>
<div style="position:absolute;left:1064px;top:469px;width:64px;height:19px;box-sizing:border-box;border:1px solid #7f9db9;background:#fff;box-shadow:inset 0 0 0 1px #e8eef6;"></div>
<div style="position:absolute;left:1111px;top:470px;width:16px;height:17px;box-sizing:border-box;border:1px solid #b4b6c8;border-radius:2px;background:linear-gradient(to bottom,#f8f8fc 0,#e2e2ee 50%,#c4c4dc 100%);"></div>
<svg style="position:absolute;left:1115.3px;top:476px;" width="8" height="5" viewBox="0 0 8 5"><path d="M0 0 3.7 3.6 7.4 0" fill="none" stroke="#1c1c1c" stroke-width="2"/></svg>
<span class="t" style="left:1033px;top:497px;font-size:11px;letter-spacing:-0.486px;">Angle:</span>
<div style="position:absolute;left:1064px;top:493px;width:38px;height:19px;box-sizing:border-box;border:1px solid #a7afba;background:#fff;"></div>
<svg style="position:absolute;left:1104px;top:499px;" width="5" height="5" viewBox="0 0 5 5"><circle cx="2.4" cy="2.2" r="1.5" fill="none" stroke="#111" stroke-width="1.1"/></svg>
<span class="t" style="left:1112.5px;top:497px;font-size:11px;color:#aeada6;letter-spacing:-0.432px;text-shadow:1px 1px 0 #fbfbfb;">Location:</span>
<div style="position:absolute;left:1156px;top:493px;width:35px;height:19px;box-sizing:border-box;border:1px solid #b4bcc4;background:#e0dfe3;"></div>
<span class="t" style="left:1192px;top:497px;font-size:11px;color:#aeada6;letter-spacing:-1.281px;text-shadow:1px 1px 0 #fbfbfb;">%</span>
<div style="position:absolute;left:1004px;top:528px;width:179px;height:12px;box-sizing:border-box;border:1px solid #000;box-shadow:1px 1px 0 #f4f4f6;background:linear-gradient(to right,#b6b7ba,#77787c);"></div>
<svg style="position:absolute;left:1193px;top:545px;" width="10" height="10" viewBox="0 0 10 10"><g fill="#c4c1a0"><rect x="8" y="0" width="2" height="2"/><rect x="4" y="4" width="2" height="2"/><rect x="8" y="4" width="2" height="2"/><rect x="0" y="8" width="2" height="2"/><rect x="4" y="8" width="2" height="2"/><rect x="8" y="8" width="2" height="2"/></g></svg>
</body></html>
